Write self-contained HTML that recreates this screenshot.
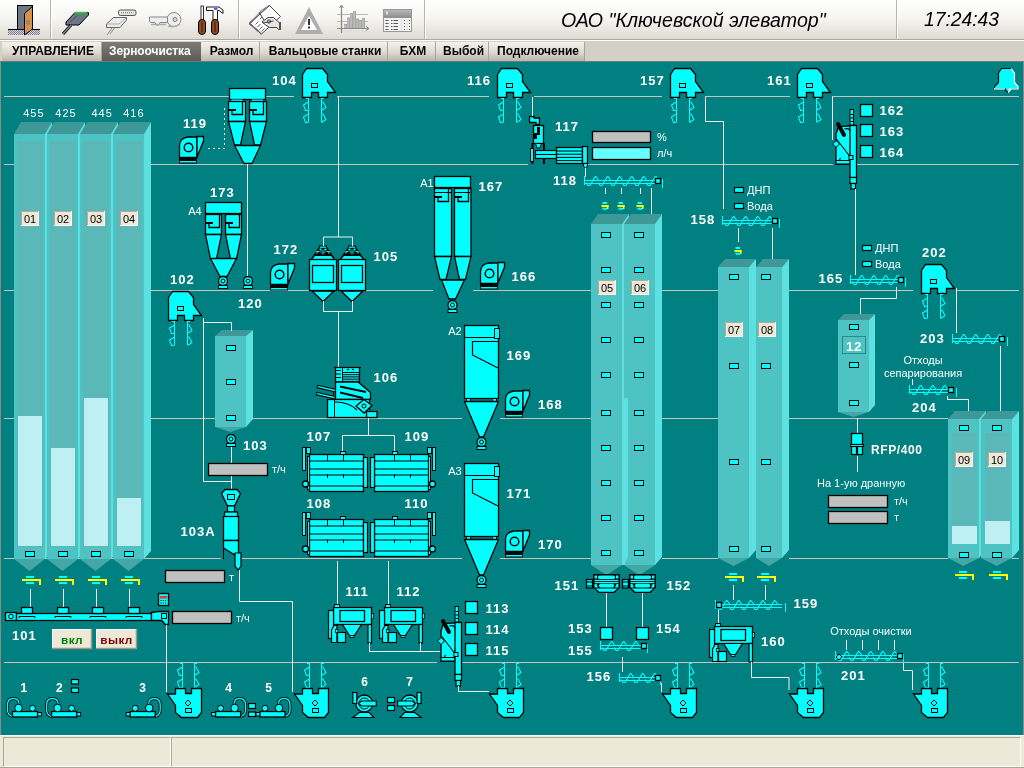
<!DOCTYPE html>
<html><head><meta charset="utf-8"><style>
html,body{margin:0;padding:0;width:1024px;height:768px;overflow:hidden;background:#ECE9D8;font-family:"Liberation Sans",sans-serif}
#tb{position:absolute;left:0;top:0;width:1024px;height:39px;background:linear-gradient(#FFFFFF,#F7F6F3 45%,#DEDBD3);border-bottom:1px solid #ADAAA2}
#tabs{position:absolute;left:0;top:40px;width:1024px;height:21px;background:#D4D0C8;border-top:1px solid #fff;box-sizing:border-box}
.tab{position:absolute;top:1px;height:19px;box-sizing:border-box;background:linear-gradient(#F4F2EC,#DDD9D0 55%,#B9B6AE);font:bold 12px "Liberation Sans",sans-serif;color:#000;text-align:center;line-height:19px;border-right:1px solid #A8A49C;white-space:nowrap;padding-left:3px}
.tab.sel{background:linear-gradient(#7E7C76,#5C5A55);color:#fff;border-right:none;text-align:left;padding-left:7px;letter-spacing:-0.1px}
#main{position:absolute;left:0;top:61px;width:1024px;height:674px;background:#008080;box-sizing:border-box;border-top:1px solid #6E7C78;border-left:1px solid #8C8A84;border-right:1px solid #8C8A84}
#status{position:absolute;left:0;top:735px;width:1024px;height:33px;background:#ECE9D8;border-top:1px solid #fff;border-bottom:1px solid #ACA899;box-sizing:border-box}
.sp{position:absolute;top:1px;height:30px;box-sizing:border-box;border:1px solid #ACA899;border-right-color:#fff;border-bottom-color:#fff}
.ttl{position:absolute;font-family:"Liberation Sans",sans-serif;font-style:italic;color:#000;white-space:nowrap}
svg{position:absolute;left:0;top:0;will-change:transform}
.ttl,.tab{will-change:transform}
</style></head><body>
<div id="tb"></div>
<div id="tabs"><div class="tab" style="left:2px;width:100px">УПРАВЛЕНИЕ</div><div class="tab sel" style="left:102px;width:99px">Зерноочистка</div><div class="tab" style="left:201px;width:59px">Размол</div><div class="tab" style="left:260px;width:128px">Вальцовые станки</div><div class="tab" style="left:388px;width:48px">БХМ</div><div class="tab" style="left:436px;width:53px">Выбой</div><div class="tab" style="left:489px;width:96px">Подключение</div></div>
<div id="main"></div>
<div id="status"><div class="sp" style="left:3px;width:168px"></div><div class="sp" style="left:171px;width:850px"></div></div>
<div class="ttl" style="left:561px;top:9px;font-size:19.6px">ОАО "Ключевской элеватор"</div>
<div class="ttl" style="left:924px;top:9px;font-size:19.3px">17:24:43</div>
<svg width="1024" height="768" viewBox="0 0 1024 768">
<rect x="50" y="0" width="1" height="39" fill="#B8B4AC"/><rect x="51" y="0" width="1" height="39" fill="#fff"/>
<rect x="238" y="0" width="1" height="39" fill="#B8B4AC"/><rect x="239" y="0" width="1" height="39" fill="#fff"/>
<rect x="424" y="0" width="1" height="39" fill="#B8B4AC"/><rect x="425" y="0" width="1" height="39" fill="#fff"/>
<rect x="896" y="0" width="1" height="39" fill="#B8B4AC"/><rect x="897" y="0" width="1" height="39" fill="#fff"/>
<g shape-rendering="crispEdges">
<defs><pattern id="dots" width="2" height="2" patternUnits="userSpaceOnUse"><rect width="2" height="2" fill="#D0D4DC"/><rect width="1" height="1" fill="#7C8494"/><rect x="1" y="1" width="1" height="1" fill="#7C8494"/></pattern></defs>
<rect x="8" y="29" width="32" height="6" fill="url(#dots)"/>
<rect x="8" y="29" width="9" height="1" fill="#000"/><rect x="33" y="29" width="7" height="1" fill="#000"/>
<rect x="17.5" y="5.5" width="15" height="24" fill="#6D7887" stroke="#000"/>
</g>
<polygon points="24.5,13.5 32.5,6.5 32.5,29 24.5,35" fill="#D8914A" stroke="#000"/>
<rect x="27" y="21" width="2" height="3" fill="#B0C8D8" stroke="#333" stroke-width="0.5"/>
<polygon points="66,22 75,12.5 88.5,12.5 88.5,15 79,25 66,25" fill="#6B7785" stroke="#000"/>
<path d="M75 12.5 H87" stroke="#10E010" stroke-width="1.5"/>
<path d="M78 15 L69 23" stroke="#4A5560" stroke-width="1"/>
<path d="M71 25 L63 34" stroke="#000" stroke-width="3"/><path d="M71 25 L63 34" stroke="#7C8894" stroke-width="1.5"/>
<rect x="118.5" y="10" width="17.5" height="5.5" rx="2" fill="#E8E8E8" stroke="#555"/>
<path d="M121 12.8 H133.5" stroke="#666" stroke-dasharray="1 1"/>
<polygon points="106.5,24 113.5,17.5 126.5,17.5 126.5,20 120,27.5 106.5,27.5" fill="#EDEDED" stroke="#666"/>
<path d="M106.5 24 H119 L126 18" stroke="#999" stroke-width="0.8" fill="none"/>
<path d="M112 28 L107 35 M114.5 28 L110 34" stroke="#888" stroke-width="1"/>
<circle cx="174" cy="19.5" r="7" fill="#EEE" stroke="#888"/><circle cx="175" cy="19.5" r="2" fill="#DDD" stroke="#777"/>
<path d="M149.5 17 H167.5 V22.5 H160 L159 25 H156 L155 22.5 H150.5 L149.5 21 Z" fill="#EEE" stroke="#888"/>
<path d="M151 24.5 H166 M168 26 Q174 28 180 24" stroke="#AAA" stroke-width="1.5" fill="none"/>
<rect x="201" y="6" width="2.5" height="14" fill="#fff" stroke="#000" stroke-width="0.8"/>
<rect x="198.5" y="19.5" width="7" height="15" rx="3.5" fill="#8B4A28" stroke="#000"/>
<path d="M206.5 7 H219 L223 10 V13.5 L219 10.5 H217.5 V20 H213 V10.5 H206.5 Z" fill="#fff" stroke="#000" stroke-width="0.9"/>
<rect x="214" y="8.2" width="3.5" height="1.6" fill="#2040FF"/>
<rect x="211.5" y="19.5" width="7" height="15" rx="3.5" fill="#8B4A28" stroke="#000"/>
<path d="M202 22 V32 M215 22 V32" stroke="#3A1A08" stroke-width="1"/>
<polygon points="249.5,23.5 269.5,5.5 280.5,16.5 261.5,34" fill="#fff" stroke="#444" stroke-width="1"/>
<path d="M249.5 23.5 L259 14 L260 12 L269.5 5.5 M249.5 23.5 L261.5 34" stroke="#666" stroke-width="2" stroke-dasharray="1 0.6" fill="none"/>
<path d="M259.5 13 L268.5 27" stroke="#444" stroke-width="1"/>
<path d="M255.5 24.5 L258.5 21.5 M257.5 27 L260.5 24 M259.5 29.5 L262.5 26.5 M261.5 31.5 L264.5 28.5 M260 19 L262 17" stroke="#555" stroke-width="0.9"/>
<path d="M262 22 L268 17.5 H273.5 L279 22.5 H280.5 V29.5 H278.5 L277 27.5 H269.5 L265 24.5 Z" fill="#E6E6E6" stroke="#444" stroke-width="1"/>
<rect x="279" y="22" width="2" height="8" fill="#555"/>
<circle cx="269" cy="21.5" r="1.6" fill="#fff" stroke="#333" stroke-width="1"/><path d="M263 23 L273.5 21" stroke="#333" stroke-width="0.9"/>
<polygon points="309,7 323,34 295,34" fill="#AEAEAE"/>
<polygon points="309,16 317,30 301,30" fill="#fff"/>
<rect x="308" y="19" width="2" height="6" fill="#333"/><rect x="308" y="26.5" width="2" height="2" fill="#333"/>
<path d="M337 14.5 H368 M337 21.5 H368" stroke="#B8B8B8" stroke-width="1"/>
<rect x="344" y="24" width="3" height="4.5" fill="#A8A8A8"/>
<rect x="344.5" y="25" width="1" height="3.5" fill="#C8C8C8"/>
<rect x="347" y="17.5" width="3" height="11.0" fill="#A8A8A8"/>
<rect x="347.5" y="18.5" width="1" height="10.0" fill="#C8C8C8"/>
<rect x="350" y="13" width="3" height="15.5" fill="#A8A8A8"/>
<rect x="350.5" y="14" width="1" height="14.5" fill="#C8C8C8"/>
<rect x="353" y="11" width="3" height="17.5" fill="#A8A8A8"/>
<rect x="353.5" y="12" width="1" height="16.5" fill="#C8C8C8"/>
<rect x="356" y="18.5" width="3" height="10.0" fill="#A8A8A8"/>
<rect x="356.5" y="19.5" width="1" height="9.0" fill="#C8C8C8"/>
<rect x="359" y="20" width="3" height="8.5" fill="#A8A8A8"/>
<rect x="359.5" y="21" width="1" height="7.5" fill="#C8C8C8"/>
<rect x="362" y="18" width="3" height="10.5" fill="#A8A8A8"/>
<rect x="362.5" y="19" width="1" height="9.5" fill="#C8C8C8"/>
<path d="M341.5 6 V33 M337 28.5 H368" stroke="#888" stroke-width="1.2"/>
<path d="M339.5 8 L341.5 5 L343.5 8 M366 26.5 L369 28.5 L366 30.5" stroke="#888" stroke-width="1" fill="none"/>
<path d="M344 31 H366" stroke="#D8D8D8" stroke-width="1.5" stroke-dasharray="1.5 1.5"/>
<defs><linearGradient id="thg" x1="0" y1="0" x2="0" y2="1"><stop offset="0" stop-color="#B8B8B8"/><stop offset="1" stop-color="#8C8C8C"/></linearGradient></defs>
<rect x="383.5" y="9.5" width="28" height="22" fill="#F4F4F4" stroke="#999"/>
<rect x="384" y="10" width="27" height="8" fill="url(#thg)"/>
<rect x="386" y="11.5" width="2" height="3" fill="#E0E0E0"/>
<path d="M385.5 20.5 H388.5 M391 20.5 H392.5 M393.5 20.5 H398 M404 20.5 H405 M409 20.5 H410" stroke="#555" stroke-width="1"/>
<path d="M385.5 23.5 H388.5 M391 23.5 H392.5 M393.5 23.5 H398 M404 23.5 H405 M409 23.5 H410" stroke="#555" stroke-width="1"/>
<path d="M385.5 26.5 H388.5 M391 26.5 H392.5 M393.5 26.5 H398 M404 26.5 H405 M409 26.5 H410" stroke="#555" stroke-width="1"/>
<path d="M385.5 29.5 H388.5 M391 29.5 H392.5 M393.5 29.5 H398 M404 29.5 H405 M409 29.5 H410" stroke="#555" stroke-width="1"/>
<path d="M401 19 V31 M407 19 V31" stroke="#DDD" stroke-width="0.8"/>
<rect x="4" y="96" width="225" height="1" fill="#C8C4BC"/>
<rect x="266" y="96" width="28" height="1" fill="#C8C4BC"/>
<rect x="337" y="96" width="152" height="1" fill="#C8C4BC"/>
<rect x="534" y="96" width="128" height="1" fill="#C8C4BC"/>
<rect x="705" y="96" width="85" height="1" fill="#C8C4BC"/>
<rect x="832" y="96" width="187" height="1" fill="#C8C4BC"/>
<rect x="4" y="164" width="524" height="1" fill="#C8C4BC"/>
<rect x="588" y="164" width="245" height="1" fill="#C8C4BC"/>
<rect x="857" y="164" width="162" height="1" fill="#C8C4BC"/>
<rect x="4" y="290" width="305" height="1" fill="#C8C4BC"/>
<rect x="366" y="290" width="67" height="1" fill="#C8C4BC"/>
<rect x="473" y="290" width="118" height="1" fill="#C8C4BC"/>
<rect x="662" y="290" width="56" height="1" fill="#C8C4BC"/>
<rect x="789" y="290" width="124" height="1" fill="#C8C4BC"/>
<rect x="957" y="290" width="62" height="1" fill="#C8C4BC"/>
<rect x="4" y="418" width="211" height="1" fill="#C8C4BC"/>
<rect x="252" y="418" width="210" height="1" fill="#C8C4BC"/>
<rect x="500" y="418" width="91" height="1" fill="#C8C4BC"/>
<rect x="662" y="418" width="56" height="1" fill="#C8C4BC"/>
<rect x="789" y="418" width="159" height="1" fill="#C8C4BC"/>
<rect x="4" y="558" width="217" height="1" fill="#C8C4BC"/>
<rect x="242" y="558" width="220" height="1" fill="#C8C4BC"/>
<rect x="500" y="558" width="91" height="1" fill="#C8C4BC"/>
<rect x="662" y="558" width="56" height="1" fill="#C8C4BC"/>
<rect x="789" y="558" width="159" height="1" fill="#C8C4BC"/>
<rect x="1012" y="558" width="7" height="1" fill="#C8C4BC"/>
<rect x="4" y="662" width="433" height="1" fill="#C8C4BC"/>
<rect x="462" y="662" width="557" height="1" fill="#C8C4BC"/>
<polygon points="14,134 21,122 52,122 45,134" fill="#3F9898"/>
<polygon points="45,134 52,122 52,551 45,559" fill="#5CE0E0"/>
<rect x="14" y="134" width="31" height="425" fill="#4EC3C3"/>
<rect x="17" y="141" width="26" height="406" fill="#5AB8B8"/>
<rect x="18" y="416" width="24" height="130" fill="#BDEFF3"/>
<polygon points="14,559 45,559 29.5,571" fill="#44A6A6"/>
<polygon points="47,134 54,122 85,122 78,134" fill="#3F9898"/>
<polygon points="78,134 85,122 85,551 78,559" fill="#5CE0E0"/>
<rect x="47" y="134" width="31" height="425" fill="#4EC3C3"/>
<rect x="50" y="141" width="26" height="406" fill="#5AB8B8"/>
<rect x="51" y="448" width="24" height="98" fill="#BDEFF3"/>
<polygon points="47,559 78,559 62.5,571" fill="#44A6A6"/>
<polygon points="80,134 87,122 118,122 111,134" fill="#3F9898"/>
<polygon points="111,134 118,122 118,551 111,559" fill="#5CE0E0"/>
<rect x="80" y="134" width="31" height="425" fill="#4EC3C3"/>
<rect x="83" y="141" width="26" height="406" fill="#5AB8B8"/>
<rect x="84" y="398" width="24" height="148" fill="#BDEFF3"/>
<polygon points="80,559 111,559 95.5,571" fill="#44A6A6"/>
<polygon points="113,134 120,122 151,122 144,134" fill="#3F9898"/>
<polygon points="144,134 151,122 151,551 144,559" fill="#5CE0E0"/>
<rect x="113" y="134" width="31" height="425" fill="#4EC3C3"/>
<rect x="116" y="141" width="26" height="406" fill="#5AB8B8"/>
<rect x="117" y="498" width="24" height="48" fill="#BDEFF3"/>
<polygon points="113,559 144,559 128.5,571" fill="#44A6A6"/>
<rect x="21" y="211" width="18" height="15" fill="#ECE9D8"/>
<path d="M21.5 226 V211.5 H39" stroke="#B8A898" fill="none"/>
<path d="M21 225.5 H38.5 V211" stroke="#fff" fill="none"/>
<text x="30.0" y="222.5" font-family="Liberation Sans" font-size="11" font-weight="normal" fill="#000" text-anchor="middle" >01</text>
<rect x="25.5" y="551.5" width="9" height="5" fill="#00FFFF" stroke="#000" stroke-width="1"/>
<rect x="54" y="211" width="18" height="15" fill="#ECE9D8"/>
<path d="M54.5 226 V211.5 H72" stroke="#B8A898" fill="none"/>
<path d="M54 225.5 H71.5 V211" stroke="#fff" fill="none"/>
<text x="63.0" y="222.5" font-family="Liberation Sans" font-size="11" font-weight="normal" fill="#000" text-anchor="middle" >02</text>
<rect x="58.5" y="551.5" width="9" height="5" fill="#00FFFF" stroke="#000" stroke-width="1"/>
<rect x="87" y="211" width="18" height="15" fill="#ECE9D8"/>
<path d="M87.5 226 V211.5 H105" stroke="#B8A898" fill="none"/>
<path d="M87 225.5 H104.5 V211" stroke="#fff" fill="none"/>
<text x="96.0" y="222.5" font-family="Liberation Sans" font-size="11" font-weight="normal" fill="#000" text-anchor="middle" >03</text>
<rect x="91.5" y="551.5" width="9" height="5" fill="#00FFFF" stroke="#000" stroke-width="1"/>
<rect x="120" y="211" width="18" height="15" fill="#ECE9D8"/>
<path d="M120.5 226 V211.5 H138" stroke="#B8A898" fill="none"/>
<path d="M120 225.5 H137.5 V211" stroke="#fff" fill="none"/>
<text x="129.0" y="222.5" font-family="Liberation Sans" font-size="11" font-weight="normal" fill="#000" text-anchor="middle" >04</text>
<rect x="124.5" y="551.5" width="9" height="5" fill="#00FFFF" stroke="#000" stroke-width="1"/>
<text x="23.2" y="117" font-family="Liberation Sans" font-size="11" font-weight="normal" fill="#fff" text-anchor="start" letter-spacing="1">455</text>
<text x="55.3" y="117" font-family="Liberation Sans" font-size="11" font-weight="normal" fill="#fff" text-anchor="start" letter-spacing="1">425</text>
<text x="91.4" y="117" font-family="Liberation Sans" font-size="11" font-weight="normal" fill="#fff" text-anchor="start" letter-spacing="1">445</text>
<text x="123.2" y="117" font-family="Liberation Sans" font-size="11" font-weight="normal" fill="#fff" text-anchor="start" letter-spacing="1">416</text>
<polygon points="302.5,74.5 306.5,68.5 322.5,68.5 327.5,74.5 327.5,81.5 335.5,92.5 327.5,92.5 327.5,97.5 318.5,97.5 318.5,92.5 311.5,92.5 311.5,97.5 302.5,97.5" fill="#00FFFF" stroke="#000" stroke-width="1.3"/>
<rect x="311.5" y="83.5" width="6" height="4" fill="#00FFFF" stroke="#000" stroke-width="1"/>
<rect x="308" y="98" width="1" height="24" fill="#00FFFF"/>
<path d="M308.5 98.5 H306 M308.5 102 L303.5 105 L305.5 110.5 H308.5 M308.5 114 L303.5 117 L305.5 122.5 H308.5" fill="none" stroke="#00FFFF" stroke-width="1.1"/>
<rect x="321" y="98" width="1" height="24" fill="#00FFFF"/>
<path d="M321.5 98.5 H324 M321.5 102 H323 L326 107.5 L321.5 110.5 M321.5 114 H323 L326 119.5 L321.5 122.5" fill="none" stroke="#00FFFF" stroke-width="1.1"/>
<polygon points="497.5,74.5 501.5,68.5 517.5,68.5 522.5,74.5 522.5,81.5 530.5,92.5 522.5,92.5 522.5,97.5 513.5,97.5 513.5,92.5 506.5,92.5 506.5,97.5 497.5,97.5" fill="#00FFFF" stroke="#000" stroke-width="1.3"/>
<rect x="506.5" y="83.5" width="6" height="4" fill="#00FFFF" stroke="#000" stroke-width="1"/>
<rect x="503" y="98" width="1" height="24" fill="#00FFFF"/>
<path d="M503.5 98.5 H501 M503.5 102 L498.5 105 L500.5 110.5 H503.5 M503.5 114 L498.5 117 L500.5 122.5 H503.5" fill="none" stroke="#00FFFF" stroke-width="1.1"/>
<rect x="516" y="98" width="1" height="24" fill="#00FFFF"/>
<path d="M516.5 98.5 H519 M516.5 102 H518 L521 107.5 L516.5 110.5 M516.5 114 H518 L521 119.5 L516.5 122.5" fill="none" stroke="#00FFFF" stroke-width="1.1"/>
<polygon points="670.5,74.5 674.5,68.5 690.5,68.5 695.5,74.5 695.5,81.5 703.5,92.5 695.5,92.5 695.5,97.5 686.5,97.5 686.5,92.5 679.5,92.5 679.5,97.5 670.5,97.5" fill="#00FFFF" stroke="#000" stroke-width="1.3"/>
<rect x="679.5" y="83.5" width="6" height="4" fill="#00FFFF" stroke="#000" stroke-width="1"/>
<rect x="676" y="98" width="1" height="24" fill="#00FFFF"/>
<path d="M676.5 98.5 H674 M676.5 102 L671.5 105 L673.5 110.5 H676.5 M676.5 114 L671.5 117 L673.5 122.5 H676.5" fill="none" stroke="#00FFFF" stroke-width="1.1"/>
<rect x="689" y="98" width="1" height="24" fill="#00FFFF"/>
<path d="M689.5 98.5 H692 M689.5 102 H691 L694 107.5 L689.5 110.5 M689.5 114 H691 L694 119.5 L689.5 122.5" fill="none" stroke="#00FFFF" stroke-width="1.1"/>
<polygon points="797.5,74.5 801.5,68.5 817.5,68.5 822.5,74.5 822.5,81.5 830.5,92.5 822.5,92.5 822.5,97.5 813.5,97.5 813.5,92.5 806.5,92.5 806.5,97.5 797.5,97.5" fill="#00FFFF" stroke="#000" stroke-width="1.3"/>
<rect x="806.5" y="83.5" width="6" height="4" fill="#00FFFF" stroke="#000" stroke-width="1"/>
<rect x="803" y="98" width="1" height="24" fill="#00FFFF"/>
<path d="M803.5 98.5 H801 M803.5 102 L798.5 105 L800.5 110.5 H803.5 M803.5 114 L798.5 117 L800.5 122.5 H803.5" fill="none" stroke="#00FFFF" stroke-width="1.1"/>
<rect x="816" y="98" width="1" height="24" fill="#00FFFF"/>
<path d="M816.5 98.5 H819 M816.5 102 H818 L821 107.5 L816.5 110.5 M816.5 114 H818 L821 119.5 L816.5 122.5" fill="none" stroke="#00FFFF" stroke-width="1.1"/>
<polygon points="168.5,297.5 172.5,291.5 188.5,291.5 193.5,297.5 193.5,304.5 201.5,315.5 193.5,315.5 193.5,320.5 184.5,320.5 184.5,315.5 177.5,315.5 177.5,320.5 168.5,320.5" fill="#00FFFF" stroke="#000" stroke-width="1.3"/>
<rect x="177.5" y="306.5" width="6" height="4" fill="#00FFFF" stroke="#000" stroke-width="1"/>
<rect x="174" y="321" width="1" height="24" fill="#00FFFF"/>
<path d="M174.5 321.5 H172 M174.5 325 L169.5 328 L171.5 333.5 H174.5 M174.5 337 L169.5 340 L171.5 345.5 H174.5" fill="none" stroke="#00FFFF" stroke-width="1.1"/>
<rect x="187" y="321" width="1" height="24" fill="#00FFFF"/>
<path d="M187.5 321.5 H190 M187.5 325 H189 L192 330.5 L187.5 333.5 M187.5 337 H189 L192 342.5 L187.5 345.5" fill="none" stroke="#00FFFF" stroke-width="1.1"/>
<polygon points="921.5,270.5 925.5,264.5 941.5,264.5 946.5,270.5 946.5,277.5 954.5,288.5 946.5,288.5 946.5,293.5 937.5,293.5 937.5,288.5 930.5,288.5 930.5,293.5 921.5,293.5" fill="#00FFFF" stroke="#000" stroke-width="1.3"/>
<rect x="930.5" y="279.5" width="6" height="4" fill="#00FFFF" stroke="#000" stroke-width="1"/>
<rect x="927" y="294" width="1" height="24" fill="#00FFFF"/>
<path d="M927.5 294.5 H925 M927.5 298 L922.5 301 L924.5 306.5 H927.5 M927.5 310 L922.5 313 L924.5 318.5 H927.5" fill="none" stroke="#00FFFF" stroke-width="1.1"/>
<rect x="940" y="294" width="1" height="24" fill="#00FFFF"/>
<path d="M940.5 294.5 H943 M940.5 298 H942 L945 303.5 L940.5 306.5 M940.5 310 H942 L945 315.5 L940.5 318.5" fill="none" stroke="#00FFFF" stroke-width="1.1"/>
<text x="138" y="285" font-family="Liberation Sans" font-size="13" font-weight="bold" fill="#fff" text-anchor="start" ></text>
<rect x="182" y="663" width="1" height="25" fill="#00FFFF"/>
<path d="M182.5 663.5 H180 M182.5 667 L177.5 670 L179.5 675.5 H182.5 M182.5 679 L177.5 682 L179.5 687.5 H182.5" fill="none" stroke="#00FFFF" stroke-width="1.1"/>
<rect x="194" y="663" width="1" height="25" fill="#00FFFF"/>
<path d="M194.5 663.5 H197 M194.5 667 H196 L199 672.5 L194.5 675.5 M194.5 679 H196 L199 684.5 L194.5 687.5" fill="none" stroke="#00FFFF" stroke-width="1.1"/>
<polygon points="167.5,694.0 175.5,694.0 175.5,688.5 185.5,688.5 185.5,693.5 191.5,693.5 191.5,688.5 201.5,688.5 201.5,712.5 197.5,717.5 181.5,717.5 175.5,712.5 175.5,705.5" fill="#00FFFF" stroke="#000" stroke-width="1.3"/>
<polygon points="188,700 191,703 188,706 185,703" fill="#00FFFF" stroke="#000" stroke-width="1"/>
<rect x="185.5" y="708.5" width="6" height="4" fill="#00FFFF" stroke="#000" stroke-width="1"/>
<rect x="309" y="663" width="1" height="25" fill="#00FFFF"/>
<path d="M309.5 663.5 H307 M309.5 667 L304.5 670 L306.5 675.5 H309.5 M309.5 679 L304.5 682 L306.5 687.5 H309.5" fill="none" stroke="#00FFFF" stroke-width="1.1"/>
<rect x="321" y="663" width="1" height="25" fill="#00FFFF"/>
<path d="M321.5 663.5 H324 M321.5 667 H323 L326 672.5 L321.5 675.5 M321.5 679 H323 L326 684.5 L321.5 687.5" fill="none" stroke="#00FFFF" stroke-width="1.1"/>
<polygon points="294.5,694.0 302.5,694.0 302.5,688.5 312.5,688.5 312.5,693.5 318.5,693.5 318.5,688.5 328.5,688.5 328.5,712.5 324.5,717.5 308.5,717.5 302.5,712.5 302.5,705.5" fill="#00FFFF" stroke="#000" stroke-width="1.3"/>
<polygon points="315,700 318,703 315,706 312,703" fill="#00FFFF" stroke="#000" stroke-width="1"/>
<rect x="312.5" y="708.5" width="6" height="4" fill="#00FFFF" stroke="#000" stroke-width="1"/>
<rect x="504" y="663" width="1" height="25" fill="#00FFFF"/>
<path d="M504.5 663.5 H502 M504.5 667 L499.5 670 L501.5 675.5 H504.5 M504.5 679 L499.5 682 L501.5 687.5 H504.5" fill="none" stroke="#00FFFF" stroke-width="1.1"/>
<rect x="516" y="663" width="1" height="25" fill="#00FFFF"/>
<path d="M516.5 663.5 H519 M516.5 667 H518 L521 672.5 L516.5 675.5 M516.5 679 H518 L521 684.5 L516.5 687.5" fill="none" stroke="#00FFFF" stroke-width="1.1"/>
<polygon points="489.5,694.0 497.5,694.0 497.5,688.5 507.5,688.5 507.5,693.5 513.5,693.5 513.5,688.5 523.5,688.5 523.5,712.5 519.5,717.5 503.5,717.5 497.5,712.5 497.5,705.5" fill="#00FFFF" stroke="#000" stroke-width="1.3"/>
<polygon points="510,700 513,703 510,706 507,703" fill="#00FFFF" stroke="#000" stroke-width="1"/>
<rect x="507.5" y="708.5" width="6" height="4" fill="#00FFFF" stroke="#000" stroke-width="1"/>
<rect x="677" y="663" width="1" height="25" fill="#00FFFF"/>
<path d="M677.5 663.5 H675 M677.5 667 L672.5 670 L674.5 675.5 H677.5 M677.5 679 L672.5 682 L674.5 687.5 H677.5" fill="none" stroke="#00FFFF" stroke-width="1.1"/>
<rect x="689" y="663" width="1" height="25" fill="#00FFFF"/>
<path d="M689.5 663.5 H692 M689.5 667 H691 L694 672.5 L689.5 675.5 M689.5 679 H691 L694 684.5 L689.5 687.5" fill="none" stroke="#00FFFF" stroke-width="1.1"/>
<polygon points="662.5,694.0 670.5,694.0 670.5,688.5 680.5,688.5 680.5,693.5 686.5,693.5 686.5,688.5 696.5,688.5 696.5,712.5 692.5,717.5 676.5,717.5 670.5,712.5 670.5,705.5" fill="#00FFFF" stroke="#000" stroke-width="1.3"/>
<polygon points="683,700 686,703 683,706 680,703" fill="#00FFFF" stroke="#000" stroke-width="1"/>
<rect x="680.5" y="708.5" width="6" height="4" fill="#00FFFF" stroke="#000" stroke-width="1"/>
<rect x="804" y="663" width="1" height="25" fill="#00FFFF"/>
<path d="M804.5 663.5 H802 M804.5 667 L799.5 670 L801.5 675.5 H804.5 M804.5 679 L799.5 682 L801.5 687.5 H804.5" fill="none" stroke="#00FFFF" stroke-width="1.1"/>
<rect x="816" y="663" width="1" height="25" fill="#00FFFF"/>
<path d="M816.5 663.5 H819 M816.5 667 H818 L821 672.5 L816.5 675.5 M816.5 679 H818 L821 684.5 L816.5 687.5" fill="none" stroke="#00FFFF" stroke-width="1.1"/>
<polygon points="789.5,694.0 797.5,694.0 797.5,688.5 807.5,688.5 807.5,693.5 813.5,693.5 813.5,688.5 823.5,688.5 823.5,712.5 819.5,717.5 803.5,717.5 797.5,712.5 797.5,705.5" fill="#00FFFF" stroke="#000" stroke-width="1.3"/>
<polygon points="810,700 813,703 810,706 807,703" fill="#00FFFF" stroke="#000" stroke-width="1"/>
<rect x="807.5" y="708.5" width="6" height="4" fill="#00FFFF" stroke="#000" stroke-width="1"/>
<rect x="928" y="663" width="1" height="25" fill="#00FFFF"/>
<path d="M928.5 663.5 H926 M928.5 667 L923.5 670 L925.5 675.5 H928.5 M928.5 679 L923.5 682 L925.5 687.5 H928.5" fill="none" stroke="#00FFFF" stroke-width="1.1"/>
<rect x="940" y="663" width="1" height="25" fill="#00FFFF"/>
<path d="M940.5 663.5 H943 M940.5 667 H942 L945 672.5 L940.5 675.5 M940.5 679 H942 L945 684.5 L940.5 687.5" fill="none" stroke="#00FFFF" stroke-width="1.1"/>
<polygon points="913.5,694.0 921.5,694.0 921.5,688.5 931.5,688.5 931.5,693.5 937.5,693.5 937.5,688.5 947.5,688.5 947.5,712.5 943.5,717.5 927.5,717.5 921.5,712.5 921.5,705.5" fill="#00FFFF" stroke="#000" stroke-width="1.3"/>
<polygon points="934,700 937,703 934,706 931,703" fill="#00FFFF" stroke="#000" stroke-width="1"/>
<rect x="931.5" y="708.5" width="6" height="4" fill="#00FFFF" stroke="#000" stroke-width="1"/>
<rect x="229.5" y="88.5" width="36" height="11" fill="#00FFFF" stroke="#000" stroke-width="1.3"/>
<rect x="231.5" y="99.5" width="11" height="1.5" fill="#00FFFF"/>
<rect x="252" y="99.5" width="11" height="1.5" fill="#00FFFF"/>
<rect x="228.5" y="101.5" width="17" height="20" fill="#00FFFF" stroke="#000" stroke-width="1.3"/>
<rect x="249.5" y="101.5" width="17" height="20" fill="#00FFFF" stroke="#000" stroke-width="1.3"/>
<polygon points="228.5,121.5 245.5,121.5 240.5,145 234.5,145" fill="#00FFFF" stroke="#000" stroke-width="1.3"/>
<polygon points="249.5,121.5 266.5,121.5 260.5,145 254.5,145" fill="#00FFFF" stroke="#000" stroke-width="1.3"/>
<path d="M242.5 101.5 V114.5 H232.0 V110.0" fill="none" stroke="#000" stroke-width="1.3"/>
<rect x="228.5" y="109.0" width="7.5" height="2" fill="#000"/>
<path d="M263.5 101.5 V114.5 H253.0 V110.0" fill="none" stroke="#000" stroke-width="1.3"/>
<rect x="249.5" y="109.0" width="7.5" height="2" fill="#000"/>
<polygon points="234.5,145.5 260.5,145.5 252,163.5 244,163.5" fill="#00FFFF" stroke="#000" stroke-width="1.3"/>
<path d="M179.5 157.5 V145 Q180 138 188 137 H197 V157.5 Z" fill="#00FFFF" stroke="#000" stroke-width="1.3"/>
<polygon points="197,136.5 203.5,136.5 203.5,141 197,157" fill="#00FFFF" stroke="#000" stroke-width="1.3"/>
<circle cx="188.5" cy="147.5" r="4.3" fill="#00FFFF" stroke="#000" stroke-width="1.5"/>
<rect x="179" y="158" width="18" height="2.5" fill="#000"/>
<rect x="179.5" y="160.5" width="17" height="2.5" fill="#00FFFF" stroke="#000" stroke-width="1"/>
<path d="M205 148.5 H224.5 V105" fill="none" stroke="#F0F0F0" stroke-width="1"/>
<path d="M205 148.5 H224.5 V105" stroke="#008080" stroke-width="1.5" stroke-dasharray="3 2" fill="none"/>
<rect x="247" y="164" width="1" height="112" fill="#F0F0F0"/>
<rect x="205.5" y="202.5" width="36" height="11" fill="#00FFFF" stroke="#000" stroke-width="1.3"/>
<rect x="205.5" y="214.5" width="16" height="20" fill="#00FFFF" stroke="#000" stroke-width="1.3"/>
<rect x="225.5" y="214.5" width="16" height="20" fill="#00FFFF" stroke="#000" stroke-width="1.3"/>
<polygon points="205.5,234.5 221.5,234.5 216.5,259 210.5,259" fill="#00FFFF" stroke="#000" stroke-width="1.3"/>
<polygon points="225.5,234.5 241.5,234.5 236.5,259 230.5,259" fill="#00FFFF" stroke="#000" stroke-width="1.3"/>
<path d="M219.5 214.5 V227.5 H209.0 V223.0" fill="none" stroke="#000" stroke-width="1.3"/>
<rect x="205.5" y="222.0" width="7.5" height="2" fill="#000"/>
<path d="M239.5 214.5 V227.5 H229.0 V223.0" fill="none" stroke="#000" stroke-width="1.3"/>
<rect x="225.5" y="222.0" width="7.5" height="2" fill="#000"/>
<polygon points="210.5,258.5 236.5,258.5 227,276.5 220,276.5" fill="#00FFFF" stroke="#000" stroke-width="1.3"/>
<text x="195" y="215" font-family="Liberation Sans" font-size="11" font-weight="normal" fill="#fff" text-anchor="middle" >A4</text>
<circle cx="223" cy="281" r="4.5" fill="#00FFFF" stroke="#000" stroke-width="1.3"/>
<circle cx="223" cy="281" r="2" fill="#00FFFF" stroke="#000" stroke-width="1"/>
<rect x="218.5" y="285.5" width="9" height="3" fill="#00FFFF" stroke="#000" stroke-width="1"/>
<circle cx="248" cy="281" r="4.5" fill="#00FFFF" stroke="#000" stroke-width="1.3"/>
<circle cx="248" cy="281" r="2" fill="#00FFFF" stroke="#000" stroke-width="1"/>
<rect x="243.5" y="285.5" width="9" height="3" fill="#00FFFF" stroke="#000" stroke-width="1"/>
<path d="M270.5 284.5 V272 Q271 265 279 264 H288 V284.5 Z" fill="#00FFFF" stroke="#000" stroke-width="1.3"/>
<polygon points="288,263.5 294.5,263.5 294.5,268 288,284" fill="#00FFFF" stroke="#000" stroke-width="1.3"/>
<circle cx="279.5" cy="274.5" r="4.3" fill="#00FFFF" stroke="#000" stroke-width="1.5"/>
<rect x="270" y="285" width="18" height="2.5" fill="#000"/>
<rect x="270.5" y="287.5" width="17" height="2.5" fill="#00FFFF" stroke="#000" stroke-width="1"/>
<polygon points="310.5,259.5 319,247 327,247 335.5,259.5" fill="#000"/>
<rect x="319" y="245.5" width="8" height="3.5" fill="#000"/>
<rect x="320" y="246.5" width="6" height="1.3" fill="#00FFFF"/>
<polygon points="312.5,259 315,256 331,256 333.5,259" fill="#00FFFF"/>
<path d="M317 253.5 V251.5 H319.5 M329 253.5 V251.5 H326.5" fill="none" stroke="#00FFFF" stroke-width="1.2"/>
<rect x="319.5" y="248.5" width="2" height="2" fill="#00FFFF"/>
<rect x="324.5" y="248.5" width="2" height="2" fill="#00FFFF"/>
<polygon points="323,249 326,252 323,255 320,252" fill="#008080"/>
<rect x="309.5" y="259.5" width="27" height="31" fill="#00FFFF" stroke="#000" stroke-width="1.3"/>
<rect x="312.5" y="265.5" width="21" height="17" fill="#00FFFF" stroke="#000" stroke-width="1.3"/>
<polygon points="312,291 334,291 323,301.5" fill="#00FFFF" stroke="#000" stroke-width="1.3"/>
<polygon points="339.5,259.5 348,247 356,247 364.5,259.5" fill="#000"/>
<rect x="348" y="245.5" width="8" height="3.5" fill="#000"/>
<rect x="349" y="246.5" width="6" height="1.3" fill="#00FFFF"/>
<polygon points="341.5,259 344,256 360,256 362.5,259" fill="#00FFFF"/>
<path d="M346 253.5 V251.5 H348.5 M358 253.5 V251.5 H355.5" fill="none" stroke="#00FFFF" stroke-width="1.2"/>
<rect x="348.5" y="248.5" width="2" height="2" fill="#00FFFF"/>
<rect x="353.5" y="248.5" width="2" height="2" fill="#00FFFF"/>
<polygon points="352,249 355,252 352,255 349,252" fill="#008080"/>
<rect x="338.5" y="259.5" width="27" height="31" fill="#00FFFF" stroke="#000" stroke-width="1.3"/>
<rect x="341.5" y="265.5" width="21" height="17" fill="#00FFFF" stroke="#000" stroke-width="1.3"/>
<polygon points="341,291 363,291 352,301.5" fill="#00FFFF" stroke="#000" stroke-width="1.3"/>
<path d="M338.5 96 V237 M323.5 246 V237 H352.5 V246" fill="none" stroke="#F0F0F0" stroke-width="1"/>
<path d="M323.5 301 V311.5 H352.5 V301 M338.5 311.5 V368" fill="none" stroke="#F0F0F0" stroke-width="1"/>
<rect x="335.5" y="367.5" width="24" height="14.5" fill="#00FFFF" stroke="#000" stroke-width="1.3"/>
<rect x="334" y="367" width="27" height="1" fill="#000"/>
<rect x="342" y="368" width="1" height="14" fill="#000"/>
<rect x="336" y="370.0" width="5" height="1" fill="#000"/>
<rect x="336" y="373.5" width="5" height="1" fill="#000"/>
<rect x="336" y="377.0" width="5" height="1" fill="#000"/>
<rect x="343" y="372.0" width="16" height="1" fill="#000"/>
<rect x="343" y="374.2" width="16" height="1" fill="#000"/>
<rect x="343" y="376.4" width="16" height="1" fill="#000"/>
<rect x="343" y="378.6" width="16" height="1" fill="#000"/>
<rect x="343" y="380.8" width="16" height="1" fill="#000"/>
<path d="M347 370 L349 369 M352 369 L354 370" fill="none" stroke="#000" stroke-width="1.2"/>
<polygon points="335.5,382 358,382 370.5,392.5 370.5,399.5 335.5,399.5" fill="#00FFFF" stroke="#000" stroke-width="1.3"/>
<path d="M340 386.5 L366 392 M340 392.5 L363 398" fill="none" stroke="#000" stroke-width="2"/>
<path d="M359 382.5 L370 392" fill="none" stroke="#000" stroke-width="1"/>
<rect x="333" y="388" width="1" height="12" fill="#000"/>
<path d="M317 386.5 L335 390.5" stroke="#000" stroke-width="3.5"/>
<path d="M318 386.7 L335 390.5" stroke="#00FFFF" stroke-width="1.3"/>
<path d="M316 393.5 L334 397.5" stroke="#000" stroke-width="3.5"/>
<path d="M317 393.7 L334 397.5" stroke="#00FFFF" stroke-width="1.3"/>
<rect x="327.5" y="399.5" width="42" height="18" fill="#00FFFF" stroke="#000" stroke-width="1.3"/>
<rect x="334" y="400" width="1" height="17" fill="#000"/>
<path d="M335 402 Q349 402 357 410" fill="none" stroke="#000" stroke-width="1.2"/>
<polygon points="356,406 364,399.5 372,405.5 364,413" fill="#00FFFF" stroke="#000" stroke-width="1.3"/>
<circle cx="364" cy="406" r="2" fill="none" stroke="#000" stroke-width="1"/>
<rect x="366.5" y="411.5" width="10.5" height="6" fill="#00FFFF" stroke="#000" stroke-width="1.3"/>
<path d="M368.5 418 V435.5 M342.5 451 V435.5 H394.5 V451" fill="none" stroke="#F0F0F0" stroke-width="1"/>
<g>
<rect x="309.5" y="454.5" width="54" height="37" fill="#00FFFF" stroke="#000" stroke-width="1.3"/>
<rect x="310" y="460.5" width="53" height="1" fill="#000"/>
<rect x="310" y="468.5" width="53" height="1" fill="#000"/>
<rect x="310" y="474.5" width="53" height="1" fill="#000"/>
<rect x="310" y="485.5" width="53" height="1" fill="#000"/>
<rect x="327" y="455" width="1" height="5.5" fill="#000"/>
<rect x="343" y="455" width="1" height="5.5" fill="#000"/>
<rect x="327" y="474.5" width="1" height="3.5" fill="#000"/>
<rect x="343" y="474.5" width="1" height="3.5" fill="#000"/>
<rect x="363.5" y="457.5" width="4" height="30" fill="#00FFFF" stroke="#000" stroke-width="1.2"/>
<rect x="340.5" y="451.5" width="5" height="3" fill="#00FFFF" stroke="#000" stroke-width="1"/>
<rect x="307.5" y="456.5" width="2" height="33" fill="#00FFFF" stroke="#000" stroke-width="1"/>
<rect x="302.5" y="447.5" width="3" height="23" fill="#00FFFF" stroke="#000" stroke-width="1"/>
<rect x="306.5" y="447.5" width="4" height="6" fill="#00FFFF" stroke="#000" stroke-width="1"/>
<circle cx="305.5" cy="484" r="3" fill="#00FFFF" stroke="#000" stroke-width="1.3"/>
</g>
<g transform="translate(804 0) scale(-1 1)">
<rect x="375.5" y="454.5" width="54" height="37" fill="#00FFFF" stroke="#000" stroke-width="1.3"/>
<rect x="376" y="460.5" width="53" height="1" fill="#000"/>
<rect x="376" y="468.5" width="53" height="1" fill="#000"/>
<rect x="376" y="474.5" width="53" height="1" fill="#000"/>
<rect x="376" y="485.5" width="53" height="1" fill="#000"/>
<rect x="393" y="455" width="1" height="5.5" fill="#000"/>
<rect x="409" y="455" width="1" height="5.5" fill="#000"/>
<rect x="393" y="474.5" width="1" height="3.5" fill="#000"/>
<rect x="409" y="474.5" width="1" height="3.5" fill="#000"/>
<rect x="429.5" y="457.5" width="4" height="30" fill="#00FFFF" stroke="#000" stroke-width="1.2"/>
<rect x="406.5" y="451.5" width="5" height="3" fill="#00FFFF" stroke="#000" stroke-width="1"/>
<rect x="373.5" y="456.5" width="2" height="33" fill="#00FFFF" stroke="#000" stroke-width="1"/>
<rect x="368.5" y="447.5" width="3" height="23" fill="#00FFFF" stroke="#000" stroke-width="1"/>
<rect x="372.5" y="447.5" width="4" height="6" fill="#00FFFF" stroke="#000" stroke-width="1"/>
<circle cx="371.5" cy="484" r="3" fill="#00FFFF" stroke="#000" stroke-width="1.3"/>
</g>
<g>
<rect x="309.5" y="519.5" width="54" height="37" fill="#00FFFF" stroke="#000" stroke-width="1.3"/>
<rect x="310" y="525.5" width="53" height="1" fill="#000"/>
<rect x="310" y="533.5" width="53" height="1" fill="#000"/>
<rect x="310" y="539.5" width="53" height="1" fill="#000"/>
<rect x="310" y="550.5" width="53" height="1" fill="#000"/>
<rect x="327" y="520" width="1" height="5.5" fill="#000"/>
<rect x="343" y="520" width="1" height="5.5" fill="#000"/>
<rect x="327" y="539.5" width="1" height="3.5" fill="#000"/>
<rect x="343" y="539.5" width="1" height="3.5" fill="#000"/>
<rect x="363.5" y="522.5" width="4" height="30" fill="#00FFFF" stroke="#000" stroke-width="1.2"/>
<rect x="340.5" y="516.5" width="5" height="3" fill="#00FFFF" stroke="#000" stroke-width="1"/>
<rect x="307.5" y="521.5" width="2" height="33" fill="#00FFFF" stroke="#000" stroke-width="1"/>
<rect x="302.5" y="512.5" width="3" height="23" fill="#00FFFF" stroke="#000" stroke-width="1"/>
<rect x="306.5" y="512.5" width="4" height="6" fill="#00FFFF" stroke="#000" stroke-width="1"/>
<circle cx="305.5" cy="549" r="3" fill="#00FFFF" stroke="#000" stroke-width="1.3"/>
</g>
<g transform="translate(804 0) scale(-1 1)">
<rect x="375.5" y="519.5" width="54" height="37" fill="#00FFFF" stroke="#000" stroke-width="1.3"/>
<rect x="376" y="525.5" width="53" height="1" fill="#000"/>
<rect x="376" y="533.5" width="53" height="1" fill="#000"/>
<rect x="376" y="539.5" width="53" height="1" fill="#000"/>
<rect x="376" y="550.5" width="53" height="1" fill="#000"/>
<rect x="393" y="520" width="1" height="5.5" fill="#000"/>
<rect x="409" y="520" width="1" height="5.5" fill="#000"/>
<rect x="393" y="539.5" width="1" height="3.5" fill="#000"/>
<rect x="409" y="539.5" width="1" height="3.5" fill="#000"/>
<rect x="429.5" y="522.5" width="4" height="30" fill="#00FFFF" stroke="#000" stroke-width="1.2"/>
<rect x="406.5" y="516.5" width="5" height="3" fill="#00FFFF" stroke="#000" stroke-width="1"/>
<rect x="373.5" y="521.5" width="2" height="33" fill="#00FFFF" stroke="#000" stroke-width="1"/>
<rect x="368.5" y="512.5" width="3" height="23" fill="#00FFFF" stroke="#000" stroke-width="1"/>
<rect x="372.5" y="512.5" width="4" height="6" fill="#00FFFF" stroke="#000" stroke-width="1"/>
<circle cx="371.5" cy="549" r="3" fill="#00FFFF" stroke="#000" stroke-width="1.3"/>
</g>
<polygon points="215,336 222,330 253,330 246,336" fill="#3F9898"/>
<polygon points="246,336 253,330 253,419 246,427" fill="#5CE0E0"/>
<rect x="215" y="336" width="31" height="91" fill="#4EC3C3"/>
<polygon points="215,427 246,427 230.5,432" fill="#44A6A6"/>
<rect x="226.5" y="345.5" width="9" height="5" fill="#00FFFF" stroke="#000" stroke-width="1"/>
<rect x="226.5" y="379.5" width="9" height="5" fill="#00FFFF" stroke="#000" stroke-width="1"/>
<rect x="226.5" y="415.5" width="9" height="5" fill="#00FFFF" stroke="#000" stroke-width="1"/>
<circle cx="231" cy="439" r="4.5" fill="#00FFFF" stroke="#000" stroke-width="1.3"/>
<circle cx="231" cy="439" r="2" fill="#00FFFF" stroke="#000" stroke-width="1"/>
<rect x="226.5" y="443.5" width="9" height="3" fill="#00FFFF" stroke="#000" stroke-width="1"/>
<path d="M203.5 318 V481.5 H231.5 M231.5 447 V490" fill="none" stroke="#F0F0F0" stroke-width="1"/>
<path d="M203.5 322.5 H231.5 V331" fill="none" stroke="#F0F0F0" stroke-width="1"/>
<rect x="208.5" y="463.5" width="59" height="12" fill="#C0C0C0" stroke="#000" stroke-width="1.3"/>
<text x="272" y="473" font-family="Liberation Sans" font-size="11" font-weight="normal" fill="#fff" text-anchor="start" >т/ч</text>
<polygon points="221.5,493.5 225,489.5 237,489.5 240.5,493.5 234.5,506 227.5,506" fill="#00FFFF" stroke="#000" stroke-width="1.3"/>
<rect x="227.5" y="494.5" width="7" height="5" fill="#00FFFF" stroke="#000" stroke-width="1"/>
<rect x="227.5" y="506" width="7" height="6" fill="#00FFFF" stroke="#000" stroke-width="1.2"/>
<rect x="224.5" y="512" width="13" height="5" fill="#00FFFF" stroke="#000" stroke-width="1.2"/>
<rect x="223.5" y="516.5" width="15" height="24" fill="#00FFFF" stroke="#000" stroke-width="1.3"/>
<polygon points="223.5,540.5 238.5,540.5 238.5,555 235,555 223.5,548" fill="#00FFFF" stroke="#000" stroke-width="1.3"/>
<rect x="223" y="540" width="1" height="19" fill="#000"/>
<polygon points="235,553 241,553 241,566 238,570 235,566" fill="#00FFFF" stroke="#000" stroke-width="1.2"/>
<path d="M239.5 570 V601.5 H292.5 V692" fill="none" stroke="#F0F0F0" stroke-width="1"/>
<rect x="165.5" y="570.5" width="59" height="12" fill="#C0C0C0" stroke="#000" stroke-width="1.3"/>
<text x="229" y="581" font-family="Liberation Sans" font-size="11" font-weight="normal" fill="#fff" text-anchor="start" >т</text>
<rect x="333.5" y="607.5" width="38" height="17" fill="#00FFFF" stroke="#000" stroke-width="1.3"/>
<rect x="340" y="610.5" width="24.5" height="11" fill="#00FFFF" stroke="#000" stroke-width="1.3"/>
<rect x="328.5" y="610.5" width="5" height="28" fill="#00FFFF" stroke="#000" stroke-width="1.2"/>
<polygon points="342.5,624.5 361.5,624.5 354.5,635.5 349.5,635.5" fill="#00FFFF" stroke="#000" stroke-width="1.2"/>
<rect x="350" y="635.5" width="4" height="2" fill="#00FFFF" stroke="#000" stroke-width="0.8"/>
<rect x="368" y="624.5" width="3.5" height="18.5" fill="#00FFFF" stroke="#000" stroke-width="1.2"/>
<polygon points="331.5,630 334,625.5 337,625.5 337,642.5 331.5,642.5" fill="#00FFFF" stroke="#000" stroke-width="1.2"/>
<rect x="337.5" y="632.5" width="8" height="10" fill="#00FFFF" stroke="#000" stroke-width="1.2"/>
<rect x="335.5" y="629.5" width="2.5" height="3" fill="#00FFFF" stroke="#000" stroke-width="0.8"/>
<rect x="334.5" y="604.5" width="5" height="3" fill="#00FFFF" stroke="#000" stroke-width="1"/>
<rect x="371.5" y="613.5" width="2" height="5" fill="#00FFFF" stroke="#000" stroke-width="0.8"/>
<rect x="384.5" y="607.5" width="38" height="17" fill="#00FFFF" stroke="#000" stroke-width="1.3"/>
<rect x="391" y="610.5" width="24.5" height="11" fill="#00FFFF" stroke="#000" stroke-width="1.3"/>
<rect x="379.5" y="610.5" width="5" height="28" fill="#00FFFF" stroke="#000" stroke-width="1.2"/>
<polygon points="393.5,624.5 412.5,624.5 405.5,635.5 400.5,635.5" fill="#00FFFF" stroke="#000" stroke-width="1.2"/>
<rect x="401" y="635.5" width="4" height="2" fill="#00FFFF" stroke="#000" stroke-width="0.8"/>
<rect x="419" y="624.5" width="3.5" height="18.5" fill="#00FFFF" stroke="#000" stroke-width="1.2"/>
<polygon points="382.5,630 385,625.5 388,625.5 388,642.5 382.5,642.5" fill="#00FFFF" stroke="#000" stroke-width="1.2"/>
<rect x="388.5" y="632.5" width="8" height="10" fill="#00FFFF" stroke="#000" stroke-width="1.2"/>
<rect x="386.5" y="629.5" width="2.5" height="3" fill="#00FFFF" stroke="#000" stroke-width="0.8"/>
<rect x="385.5" y="604.5" width="5" height="3" fill="#00FFFF" stroke="#000" stroke-width="1"/>
<rect x="422.5" y="613.5" width="2" height="5" fill="#00FFFF" stroke="#000" stroke-width="0.8"/>
<path d="M337.5 561 V604 M388.5 561 V604" fill="none" stroke="#F0F0F0" stroke-width="1"/>
<path d="M369.5 643 V651.5 H441 M420.5 643 V651.5" fill="none" stroke="#F0F0F0" stroke-width="1"/>
<path d="M400 597 " fill="none" stroke="#F0F0F0" stroke-width="1"/>
<rect x="455.0" y="606.5" width="3.5" height="15.5" fill="#00FFFF" stroke="#000" stroke-width="1"/>
<rect x="455.5" y="611.0" width="3.0" height="1" fill="#000"/>
<rect x="455.5" y="614.5" width="3.0" height="1" fill="#000"/>
<rect x="455.5" y="618.0" width="3.0" height="1" fill="#000"/>
<polygon points="441.0,631 443.5,623.5 461.0,622.5 461.0,661 441.0,661" fill="#00FFFF" stroke="#000" stroke-width="1.3"/>
<polygon points="437.5,641 441.0,637.5 444.5,641 441.0,644.5" fill="#00FFFF" stroke="#000" stroke-width="1"/>
<path d="M441.5 636 L454.5 653 M461.0 632 L455.0 651 M443.5 659 L445.5 655" fill="none" stroke="#000" stroke-width="1.1"/>
<path d="M449.5 626 Q455.5 624 455.5 631" fill="none" stroke="#000" stroke-width="1.2"/>
<path d="M443.0 621 L449.0 632" stroke="#000" stroke-width="4" stroke-linecap="round"/>
<rect x="441.0" y="657.5" width="14" height="3.5" fill="#00FFFF" stroke="#000" stroke-width="1"/>
<rect x="455.0" y="622.5" width="6.5" height="52" fill="#00FFFF" stroke="#000" stroke-width="1.3"/>
<rect x="454.0" y="652.5" width="4" height="4" fill="#00FFFF" stroke="#000" stroke-width="1"/>
<rect x="455.0" y="674.5" width="6.5" height="6" fill="#00FFFF" stroke="#000" stroke-width="1.2"/>
<rect x="456.0" y="680.5" width="4.5" height="5.5" fill="#00FFFF" stroke="#000" stroke-width="1.2"/>
<rect x="465.5" y="601.5" width="12" height="12" fill="#00FFFF" stroke="#000" stroke-width="1.3"/>
<rect x="465.5" y="622.5" width="12" height="12" fill="#00FFFF" stroke="#000" stroke-width="1.3"/>
<rect x="465.5" y="643.5" width="12" height="12" fill="#00FFFF" stroke="#000" stroke-width="1.3"/>
<path d="M458.5 686 V691.5 H489" fill="none" stroke="#F0F0F0" stroke-width="1"/>
<rect x="434.5" y="176.5" width="36" height="11" fill="#00FFFF" stroke="#000" stroke-width="1.3"/>
<rect x="434.5" y="188.5" width="17" height="68" fill="#00FFFF" stroke="#000" stroke-width="1.3"/>
<rect x="454.5" y="188.5" width="16.5" height="68" fill="#00FFFF" stroke="#000" stroke-width="1.3"/>
<path d="M435 192.5 H451 M455 192.5 H470" fill="none" stroke="#000" stroke-width="1.2"/>
<path d="M448.5 188.5 V201.5 H438.0 V197.0" fill="none" stroke="#000" stroke-width="1.3"/>
<rect x="434.5" y="196.0" width="7.5" height="2" fill="#000"/>
<path d="M468.5 188.5 V201.5 H458.0 V197.0" fill="none" stroke="#000" stroke-width="1.3"/>
<rect x="454.5" y="196.0" width="7.5" height="2" fill="#000"/>
<polygon points="434.5,256.5 451.5,256.5 446,279.5 440,279.5" fill="#00FFFF" stroke="#000" stroke-width="1.3"/>
<polygon points="454.5,256.5 471,256.5 465.5,279.5 459.5,279.5" fill="#00FFFF" stroke="#000" stroke-width="1.3"/>
<polygon points="441.5,280 464.5,280 455.5,299 449,299" fill="#00FFFF" stroke="#000" stroke-width="1.3"/>
<circle cx="452.5" cy="305" r="4.5" fill="#00FFFF" stroke="#000" stroke-width="1.3"/>
<circle cx="452.5" cy="305" r="2" fill="#00FFFF" stroke="#000" stroke-width="1"/>
<rect x="448.0" y="309.5" width="9" height="3" fill="#00FFFF" stroke="#000" stroke-width="1"/>
<text x="427" y="187" font-family="Liberation Sans" font-size="11" font-weight="normal" fill="#fff" text-anchor="middle" >A1</text>
<path d="M480.5 283.5 V271 Q481 264 489 263 H498 V283.5 Z" fill="#00FFFF" stroke="#000" stroke-width="1.3"/>
<polygon points="498,262.5 504.5,262.5 504.5,267 498,283" fill="#00FFFF" stroke="#000" stroke-width="1.3"/>
<circle cx="489.5" cy="273.5" r="4.3" fill="#00FFFF" stroke="#000" stroke-width="1.5"/>
<rect x="480" y="284" width="18" height="2.5" fill="#000"/>
<rect x="480.5" y="286.5" width="17" height="2.5" fill="#00FFFF" stroke="#000" stroke-width="1"/>
<rect x="464.5" y="325.5" width="34" height="73" fill="#00FFFF" stroke="#000" stroke-width="1.3"/>
<rect x="465" y="337" width="33" height="1" fill="#000"/>
<rect x="494.5" y="328.5" width="5" height="10" fill="#00FFFF" stroke="#000" stroke-width="1"/>
<path d="M472.5 341 V355 L498 368" fill="none" stroke="#000" stroke-width="1.2"/>
<rect x="472" y="341" width="26" height="1" fill="#000"/>
<rect x="466.5" y="398.5" width="4" height="3" fill="#00FFFF" stroke="#000" stroke-width="1"/>
<rect x="492.5" y="398.5" width="4" height="3" fill="#00FFFF" stroke="#000" stroke-width="1"/>
<polygon points="464.5,401.5 498.5,401.5 483.5,437 479.5,437" fill="#00FFFF" stroke="#000" stroke-width="1.3"/>
<rect x="464.5" y="463.5" width="34" height="73" fill="#00FFFF" stroke="#000" stroke-width="1.3"/>
<rect x="465" y="475" width="33" height="1" fill="#000"/>
<rect x="494.5" y="466.5" width="5" height="10" fill="#00FFFF" stroke="#000" stroke-width="1"/>
<path d="M472.5 479 V493 L498 506" fill="none" stroke="#000" stroke-width="1.2"/>
<rect x="472" y="479" width="26" height="1" fill="#000"/>
<rect x="466.5" y="536.5" width="4" height="3" fill="#00FFFF" stroke="#000" stroke-width="1"/>
<rect x="492.5" y="536.5" width="4" height="3" fill="#00FFFF" stroke="#000" stroke-width="1"/>
<polygon points="464.5,539.5 498.5,539.5 483.5,575 479.5,575" fill="#00FFFF" stroke="#000" stroke-width="1.3"/>
<circle cx="481.5" cy="442" r="4.5" fill="#00FFFF" stroke="#000" stroke-width="1.3"/>
<circle cx="481.5" cy="442" r="2" fill="#00FFFF" stroke="#000" stroke-width="1"/>
<rect x="477.0" y="446.5" width="9" height="3" fill="#00FFFF" stroke="#000" stroke-width="1"/>
<circle cx="481.5" cy="580" r="4.5" fill="#00FFFF" stroke="#000" stroke-width="1.3"/>
<circle cx="481.5" cy="580" r="2" fill="#00FFFF" stroke="#000" stroke-width="1"/>
<rect x="477.0" y="584.5" width="9" height="3" fill="#00FFFF" stroke="#000" stroke-width="1"/>
<text x="455" y="335" font-family="Liberation Sans" font-size="11" font-weight="normal" fill="#fff" text-anchor="middle" >A2</text>
<text x="455" y="475" font-family="Liberation Sans" font-size="11" font-weight="normal" fill="#fff" text-anchor="middle" >A3</text>
<path d="M505.5 411.5 V399 Q506 392 514 391 H523 V411.5 Z" fill="#00FFFF" stroke="#000" stroke-width="1.3"/>
<polygon points="523,390.5 529.5,390.5 529.5,395 523,411" fill="#00FFFF" stroke="#000" stroke-width="1.3"/>
<circle cx="514.5" cy="401.5" r="4.3" fill="#00FFFF" stroke="#000" stroke-width="1.5"/>
<rect x="505" y="412" width="18" height="2.5" fill="#000"/>
<rect x="505.5" y="414.5" width="17" height="2.5" fill="#00FFFF" stroke="#000" stroke-width="1"/>
<path d="M505.5 551.5 V539 Q506 532 514 531 H523 V551.5 Z" fill="#00FFFF" stroke="#000" stroke-width="1.3"/>
<polygon points="523,530.5 529.5,530.5 529.5,535 523,551" fill="#00FFFF" stroke="#000" stroke-width="1.3"/>
<circle cx="514.5" cy="541.5" r="4.3" fill="#00FFFF" stroke="#000" stroke-width="1.5"/>
<rect x="505" y="552" width="18" height="2.5" fill="#000"/>
<rect x="505.5" y="554.5" width="17" height="2.5" fill="#00FFFF" stroke="#000" stroke-width="1"/>
<polygon points="529.5,116.5 534,116.5 534,118 539.5,118 539.5,124.5 536,124.5 536,122.5 529.5,122.5" fill="#00FFFF" stroke="#000" stroke-width="1.3"/>
<rect x="533.5" y="125.5" width="10" height="18" fill="#00FFFF" stroke="#000" stroke-width="1.3"/>
<rect x="537" y="127" width="3" height="6" fill="#000"/>
<rect x="534" y="133" width="3" height="6" fill="#000"/>
<rect x="536" y="133" width="4" height="2" fill="#000"/>
<rect x="531.5" y="143" width="2" height="21" fill="#000"/>
<rect x="543" y="143" width="2" height="21" fill="#000"/>
<polygon points="535.5,143.5 541.5,143.5 540,148 537,148" fill="#00FFFF" stroke="#000" stroke-width="1"/>
<rect x="530.5" y="148.5" width="3" height="13" fill="#00FFFF" stroke="#000" stroke-width="1"/>
<rect x="535.5" y="150.5" width="21" height="8" fill="#00FFFF" stroke="#000" stroke-width="1.2"/>
<rect x="536" y="154" width="20" height="1" fill="#000"/>
<rect x="556.5" y="147.5" width="26" height="16" fill="#00FFFF" stroke="#000" stroke-width="1.3"/>
<rect x="557" y="150.5" width="25" height="1" fill="#000"/>
<rect x="557" y="153.7" width="25" height="1" fill="#000"/>
<rect x="557" y="156.9" width="25" height="1" fill="#000"/>
<rect x="557" y="160.1" width="25" height="1" fill="#000"/>
<rect x="582.5" y="146.5" width="5" height="17" fill="#00FFFF" stroke="#000" stroke-width="1.3"/>
<polygon points="583.5,163.5 587.5,163.5 587.5,166 585.5,168.5 583.5,166" fill="#00FFFF" stroke="#000" stroke-width="1"/>
<rect x="532" y="97" width="1" height="19" fill="#F0F0F0"/>
<rect x="592.5" y="131.5" width="58" height="11" fill="#C0C0C0" stroke="#000" stroke-width="1.3"/>
<rect x="592.5" y="147.5" width="58" height="12" fill="#66FFFF" stroke="#000" stroke-width="1.3"/>
<text x="657" y="141" font-family="Liberation Sans" font-size="11" font-weight="normal" fill="#fff" text-anchor="start" >%</text>
<text x="657" y="157" font-family="Liberation Sans" font-size="11" font-weight="normal" fill="#fff" text-anchor="start" >л/ч</text>
<rect x="585" y="168" width="1" height="9" fill="#F0F0F0"/>
<rect x="584" y="176" width="1" height="9" fill="#00FFFF"/>
<rect x="662" y="179" width="1" height="9" fill="#00FFFF"/>
<rect x="584" y="180" width="75" height="1" fill="#00FFFF"/>
<rect x="584" y="183" width="75" height="1" fill="#00FFFF"/>
<path d="M586 182.5 L588 185.5 L590 185.5 L595 177 L596 176.5 L598.5 180 M598 182.5 L600 185.5 L602 185.5 L607 177 L608 176.5 L610.5 180 M610 182.5 L612 185.5 L614 185.5 L619 177 L620 176.5 L622.5 180 M622 182.5 L624 185.5 L626 185.5 L631 177 L632 176.5 L634.5 180 M634 182.5 L636 185.5 L638 185.5 L643 177 L644 176.5 L646.5 180 M646 182.5 L648 185.5 L650 185.5 L655 177 L656 176.5 L658.5 180 " fill="none" stroke="#00FFFF" stroke-width="1.1"/>
<rect x="655.5" y="178.5" width="5" height="5" fill="#00FFFF" stroke="#000" stroke-width="1.3"/>
<rect x="605" y="188" width="1" height="6" fill="#F0F0F0"/>
<rect x="602.5" y="202" width="4.5" height="2" fill="#00FFFF"/>
<rect x="601.5" y="205" width="7" height="2" fill="#FFFF00"/>
<rect x="607.0" y="205" width="1.5" height="4" fill="#FFFF00"/>
<rect x="602.5" y="207.8" width="4.5" height="2" fill="#00FFFF"/>
<rect x="621" y="188" width="1" height="6" fill="#F0F0F0"/>
<rect x="618.5" y="202" width="4.5" height="2" fill="#00FFFF"/>
<rect x="617.5" y="205" width="7" height="2" fill="#FFFF00"/>
<rect x="623.0" y="205" width="1.5" height="4" fill="#FFFF00"/>
<rect x="618.5" y="207.8" width="4.5" height="2" fill="#00FFFF"/>
<rect x="640" y="188" width="1" height="6" fill="#F0F0F0"/>
<rect x="637.5" y="202" width="4.5" height="2" fill="#00FFFF"/>
<rect x="636.5" y="205" width="7" height="2" fill="#FFFF00"/>
<rect x="642.0" y="205" width="1.5" height="4" fill="#FFFF00"/>
<rect x="637.5" y="207.8" width="4.5" height="2" fill="#00FFFF"/>
<rect x="651" y="188" width="1" height="26" fill="#F0F0F0"/>
<polygon points="591,224 598,214 629,214 622,224" fill="#3F9898"/>
<polygon points="622,224 629,214 629,557 622,565" fill="#5CE0E0"/>
<rect x="591" y="224" width="31" height="341" fill="#4EC3C3"/>
<polygon points="591,565 622,565 606.5,575" fill="#44A6A6"/>
<polygon points="624,224 631,214 662,214 655,224" fill="#3F9898"/>
<polygon points="655,224 662,214 662,557 655,565" fill="#5CE0E0"/>
<rect x="624" y="224" width="31" height="341" fill="#4EC3C3"/>
<polygon points="624,565 655,565 639.5,575" fill="#44A6A6"/>
<rect x="622" y="398" width="6" height="159" fill="#5CE0E0"/>
<polygon points="622,557 628,557 624,565 622,565" fill="#5CE0E0"/>
<rect x="628" y="398" width="27" height="167" fill="#4EC3C3"/>
<polygon points="624,565 655,565 639.5,575" fill="#44A6A6"/>
<rect x="601.5" y="232.5" width="9" height="5" fill="#00FFFF" stroke="#000" stroke-width="1"/>
<rect x="601.5" y="267.5" width="9" height="5" fill="#00FFFF" stroke="#000" stroke-width="1"/>
<rect x="601.5" y="302.5" width="9" height="5" fill="#00FFFF" stroke="#000" stroke-width="1"/>
<rect x="601.5" y="337.5" width="9" height="5" fill="#00FFFF" stroke="#000" stroke-width="1"/>
<rect x="601.5" y="372.5" width="9" height="5" fill="#00FFFF" stroke="#000" stroke-width="1"/>
<rect x="601.5" y="410.5" width="9" height="5" fill="#00FFFF" stroke="#000" stroke-width="1"/>
<rect x="601.5" y="445.5" width="9" height="5" fill="#00FFFF" stroke="#000" stroke-width="1"/>
<rect x="601.5" y="480.5" width="9" height="5" fill="#00FFFF" stroke="#000" stroke-width="1"/>
<rect x="601.5" y="515.5" width="9" height="5" fill="#00FFFF" stroke="#000" stroke-width="1"/>
<rect x="601.5" y="550.5" width="9" height="5" fill="#00FFFF" stroke="#000" stroke-width="1"/>
<rect x="634.5" y="232.5" width="9" height="5" fill="#00FFFF" stroke="#000" stroke-width="1"/>
<rect x="634.5" y="267.5" width="9" height="5" fill="#00FFFF" stroke="#000" stroke-width="1"/>
<rect x="634.5" y="302.5" width="9" height="5" fill="#00FFFF" stroke="#000" stroke-width="1"/>
<rect x="634.5" y="337.5" width="9" height="5" fill="#00FFFF" stroke="#000" stroke-width="1"/>
<rect x="634.5" y="372.5" width="9" height="5" fill="#00FFFF" stroke="#000" stroke-width="1"/>
<rect x="634.5" y="410.5" width="9" height="5" fill="#00FFFF" stroke="#000" stroke-width="1"/>
<rect x="634.5" y="445.5" width="9" height="5" fill="#00FFFF" stroke="#000" stroke-width="1"/>
<rect x="634.5" y="480.5" width="9" height="5" fill="#00FFFF" stroke="#000" stroke-width="1"/>
<rect x="634.5" y="515.5" width="9" height="5" fill="#00FFFF" stroke="#000" stroke-width="1"/>
<rect x="634.5" y="550.5" width="9" height="5" fill="#00FFFF" stroke="#000" stroke-width="1"/>
<rect x="598" y="280" width="18" height="15" fill="#ECE9D8"/>
<path d="M598.5 295 V280.5 H616" stroke="#B8A898" fill="none"/>
<path d="M598 294.5 H615.5 V280" stroke="#fff" fill="none"/>
<text x="607.0" y="291.5" font-family="Liberation Sans" font-size="11" font-weight="normal" fill="#000" text-anchor="middle" >05</text>
<rect x="631" y="280" width="18" height="15" fill="#ECE9D8"/>
<path d="M631.5 295 V280.5 H649" stroke="#B8A898" fill="none"/>
<path d="M631 294.5 H648.5 V280" stroke="#fff" fill="none"/>
<text x="640.0" y="291.5" font-family="Liberation Sans" font-size="11" font-weight="normal" fill="#000" text-anchor="middle" >06</text>
<polygon points="718,267 725,259 756,259 749,267" fill="#3F9898"/>
<polygon points="749,267 756,259 756,550 749,558" fill="#5CE0E0"/>
<rect x="718" y="267" width="31" height="291" fill="#4EC3C3"/>
<polygon points="718,558 749,558 733.5,566" fill="#44A6A6"/>
<polygon points="756,267 763,259 789,259 782,267" fill="#3F9898"/>
<polygon points="782,267 789,259 789,550 782,558" fill="#5CE0E0"/>
<rect x="756" y="267" width="26" height="291" fill="#4EC3C3"/>
<polygon points="756,558 782,558 769.0,566" fill="#44A6A6"/>
<rect x="729.5" y="274.5" width="9" height="5" fill="#00FFFF" stroke="#000" stroke-width="1"/>
<rect x="729.5" y="363.5" width="9" height="5" fill="#00FFFF" stroke="#000" stroke-width="1"/>
<rect x="729.5" y="459.5" width="9" height="5" fill="#00FFFF" stroke="#000" stroke-width="1"/>
<rect x="729.5" y="546.5" width="9" height="5" fill="#00FFFF" stroke="#000" stroke-width="1"/>
<rect x="761.5" y="274.5" width="9" height="5" fill="#00FFFF" stroke="#000" stroke-width="1"/>
<rect x="761.5" y="363.5" width="9" height="5" fill="#00FFFF" stroke="#000" stroke-width="1"/>
<rect x="761.5" y="459.5" width="9" height="5" fill="#00FFFF" stroke="#000" stroke-width="1"/>
<rect x="761.5" y="546.5" width="9" height="5" fill="#00FFFF" stroke="#000" stroke-width="1"/>
<rect x="725" y="322" width="18" height="15" fill="#ECE9D8"/>
<path d="M725.5 337 V322.5 H743" stroke="#B8A898" fill="none"/>
<path d="M725 336.5 H742.5 V322" stroke="#fff" fill="none"/>
<text x="734.0" y="333.5" font-family="Liberation Sans" font-size="11" font-weight="normal" fill="#000" text-anchor="middle" >07</text>
<rect x="758" y="322" width="18" height="15" fill="#ECE9D8"/>
<path d="M758.5 337 V322.5 H776" stroke="#B8A898" fill="none"/>
<path d="M758 336.5 H775.5 V322" stroke="#fff" fill="none"/>
<text x="767.0" y="333.5" font-family="Liberation Sans" font-size="11" font-weight="normal" fill="#000" text-anchor="middle" >08</text>
<polygon points="838,320 844,314 875,314 869,320" fill="#3F9898"/>
<polygon points="869,320 875,314 875,405 869,412" fill="#5CE0E0"/>
<rect x="838" y="320" width="31" height="92" fill="#4EC3C3"/>
<polygon points="838,412 869,412 853.5,417" fill="#44A6A6"/>
<rect x="849.5" y="324.5" width="9" height="5" fill="#00FFFF" stroke="#000" stroke-width="1"/>
<rect x="849.5" y="362.5" width="9" height="5" fill="#00FFFF" stroke="#000" stroke-width="1"/>
<rect x="849.5" y="400.5" width="9" height="5" fill="#00FFFF" stroke="#000" stroke-width="1"/>
<rect x="842.5" y="336.5" width="23" height="17" fill="none" stroke="#2E8888" stroke-width="1"/>
<text x="854" y="351" font-family="Liberation Sans" font-size="13.5" font-weight="bold" fill="#fff" text-anchor="middle" letter-spacing="0.5">12</text>
<polygon points="948,419 955,411 986,411 979,419" fill="#3F9898"/>
<polygon points="979,419 986,411 986,550 979,558" fill="#5CE0E0"/>
<rect x="948" y="419" width="31" height="139" fill="#4EC3C3"/>
<polygon points="948,558 979,558 963.5,566" fill="#44A6A6"/>
<polygon points="981,419 988,411 1019,411 1012,419" fill="#3F9898"/>
<polygon points="1012,419 1019,411 1019,550 1012,558" fill="#5CE0E0"/>
<rect x="981" y="419" width="31" height="139" fill="#4EC3C3"/>
<polygon points="981,558 1012,558 996.5,566" fill="#44A6A6"/>
<rect x="952" y="433" width="25" height="111" fill="#5AB8B8"/>
<rect x="985" y="433" width="25" height="111" fill="#5AB8B8"/>
<rect x="952" y="526" width="25" height="18" fill="#BDEFF3"/>
<rect x="985" y="521" width="25" height="23" fill="#BDEFF3"/>
<rect x="959.5" y="425.5" width="9" height="5" fill="#00FFFF" stroke="#000" stroke-width="1"/>
<rect x="959.5" y="552.5" width="9" height="5" fill="#00FFFF" stroke="#000" stroke-width="1"/>
<rect x="992.5" y="425.5" width="9" height="5" fill="#00FFFF" stroke="#000" stroke-width="1"/>
<rect x="992.5" y="552.5" width="9" height="5" fill="#00FFFF" stroke="#000" stroke-width="1"/>
<rect x="955" y="452" width="18" height="15" fill="#ECE9D8"/>
<path d="M955.5 467 V452.5 H973" stroke="#B8A898" fill="none"/>
<path d="M955 466.5 H972.5 V452" stroke="#fff" fill="none"/>
<text x="964.0" y="463.5" font-family="Liberation Sans" font-size="11" font-weight="normal" fill="#000" text-anchor="middle" >09</text>
<rect x="988" y="452" width="18" height="15" fill="#ECE9D8"/>
<path d="M988.5 467 V452.5 H1006" stroke="#B8A898" fill="none"/>
<path d="M988 466.5 H1005.5 V452" stroke="#fff" fill="none"/>
<text x="997.0" y="463.5" font-family="Liberation Sans" font-size="11" font-weight="normal" fill="#000" text-anchor="middle" >10</text>
<rect x="26" y="576" width="8" height="2" fill="#00FFFF"/>
<rect x="22" y="579" width="19" height="2" fill="#FFFF00"/>
<rect x="39" y="579" width="2" height="6" fill="#FFFF00"/>
<rect x="26" y="582" width="8" height="2" fill="#00FFFF"/>
<rect x="59" y="576" width="8" height="2" fill="#00FFFF"/>
<rect x="55" y="579" width="19" height="2" fill="#FFFF00"/>
<rect x="72" y="579" width="2" height="6" fill="#FFFF00"/>
<rect x="59" y="582" width="8" height="2" fill="#00FFFF"/>
<rect x="92" y="576" width="8" height="2" fill="#00FFFF"/>
<rect x="88" y="579" width="19" height="2" fill="#FFFF00"/>
<rect x="105" y="579" width="2" height="6" fill="#FFFF00"/>
<rect x="92" y="582" width="8" height="2" fill="#00FFFF"/>
<rect x="125" y="576" width="8" height="2" fill="#00FFFF"/>
<rect x="121" y="579" width="19" height="2" fill="#FFFF00"/>
<rect x="138" y="579" width="2" height="6" fill="#FFFF00"/>
<rect x="125" y="582" width="8" height="2" fill="#00FFFF"/>
<rect x="30" y="589" width="1" height="18" fill="#F0F0F0"/>
<rect x="63" y="589" width="1" height="18" fill="#F0F0F0"/>
<rect x="96" y="589" width="1" height="18" fill="#F0F0F0"/>
<rect x="129" y="589" width="1" height="18" fill="#F0F0F0"/>
<rect x="729" y="573" width="8" height="2" fill="#00FFFF"/>
<rect x="725" y="576" width="19" height="2" fill="#FFFF00"/>
<rect x="742" y="576" width="2" height="6" fill="#FFFF00"/>
<rect x="729" y="579" width="8" height="2" fill="#00FFFF"/>
<rect x="761" y="573" width="8" height="2" fill="#00FFFF"/>
<rect x="757" y="576" width="19" height="2" fill="#FFFF00"/>
<rect x="774" y="576" width="2" height="6" fill="#FFFF00"/>
<rect x="761" y="579" width="8" height="2" fill="#00FFFF"/>
<rect x="959" y="571" width="8" height="2" fill="#00FFFF"/>
<rect x="955" y="574" width="19" height="2" fill="#FFFF00"/>
<rect x="972" y="574" width="2" height="6" fill="#FFFF00"/>
<rect x="959" y="577" width="8" height="2" fill="#00FFFF"/>
<rect x="993" y="571" width="8" height="2" fill="#00FFFF"/>
<rect x="989" y="574" width="19" height="2" fill="#FFFF00"/>
<rect x="1006" y="574" width="2" height="6" fill="#FFFF00"/>
<rect x="993" y="577" width="8" height="2" fill="#00FFFF"/>
<rect x="735.5" y="247" width="4.5" height="2" fill="#00FFFF"/>
<rect x="734.5" y="250" width="7" height="2" fill="#FFFF00"/>
<rect x="740.0" y="250" width="1.5" height="4" fill="#FFFF00"/>
<rect x="735.5" y="252.8" width="4.5" height="2" fill="#00FFFF"/>
<rect x="738" y="228" width="1" height="14" fill="#F0F0F0"/>
<rect x="5.5" y="612.5" width="11" height="8" fill="#00FFFF" stroke="#000" stroke-width="1.3"/>
<circle cx="11" cy="616.5" r="2.3" fill="#00FFFF" stroke="#000" stroke-width="1"/>
<rect x="16.5" y="613.5" width="135" height="7" fill="#00FFFF" stroke="#000" stroke-width="1.3"/>
<rect x="21.5" y="607.5" width="11" height="6" fill="#00FFFF" stroke="#000" stroke-width="1.3"/>
<path d="M19 618 V616.5 H35 V618" fill="none" stroke="#000" stroke-width="1"/>
<rect x="57.5" y="607.5" width="11" height="6" fill="#00FFFF" stroke="#000" stroke-width="1.3"/>
<path d="M55 618 V616.5 H71 V618" fill="none" stroke="#000" stroke-width="1"/>
<rect x="92.5" y="607.5" width="11" height="6" fill="#00FFFF" stroke="#000" stroke-width="1.3"/>
<path d="M90 618 V616.5 H106 V618" fill="none" stroke="#000" stroke-width="1"/>
<rect x="128.5" y="607.5" width="11" height="6" fill="#00FFFF" stroke="#000" stroke-width="1.3"/>
<path d="M126 618 V616.5 H142 V618" fill="none" stroke="#000" stroke-width="1"/>
<polygon points="151.5,612.5 158,611.5 168.5,611.5 168.5,624.5 165,624.5 162,620.5 151.5,620.5" fill="#00FFFF" stroke="#000" stroke-width="1.3"/>
<rect x="161.5" y="613.5" width="5" height="5" fill="#00FFFF" stroke="#000" stroke-width="1"/>
<rect x="158.5" y="593.5" width="10" height="12" fill="#00FFFF" stroke="#000" stroke-width="1.3"/>
<rect x="160" y="596" width="7" height="2.5" fill="#FF3030"/>
<rect x="160.5" y="600.0" width="1" height="1" fill="#000"/>
<rect x="160.5" y="602.5" width="1" height="1" fill="#000"/>
<rect x="162.8" y="600.0" width="1" height="1" fill="#000"/>
<rect x="162.8" y="602.5" width="1" height="1" fill="#000"/>
<rect x="165.1" y="600.0" width="1" height="1" fill="#000"/>
<rect x="165.1" y="602.5" width="1" height="1" fill="#000"/>
<rect x="166" y="625" width="1" height="67" fill="#F0F0F0"/>
<rect x="172.5" y="611.5" width="59" height="12" fill="#C0C0C0" stroke="#000" stroke-width="1.3"/>
<text x="236" y="622" font-family="Liberation Sans" font-size="11" font-weight="normal" fill="#fff" text-anchor="start" >т/ч</text>
<rect x="52" y="629" width="40" height="20" fill="#ECE9D8"/>
<path d="M52.5 649 V629.5 H92" stroke="#fff" fill="none"/>
<path d="M52 648.5 H91.5 V629" stroke="#9C9888" fill="none" stroke-width="1.5"/>
<text x="72.0" y="644" font-family="Liberation Sans" font-size="11.8" font-weight="bold" fill="#008000" text-anchor="middle" letter-spacing="0.4">вкл</text>
<rect x="96" y="629" width="41" height="20" fill="#ECE9D8"/>
<path d="M96.5 649 V629.5 H137" stroke="#fff" fill="none"/>
<path d="M96 648.5 H136.5 V629" stroke="#9C9888" fill="none" stroke-width="1.5"/>
<text x="116.5" y="644" font-family="Liberation Sans" font-size="11.8" font-weight="bold" fill="#800000" text-anchor="middle" letter-spacing="0.4">выкл</text>
<rect x="586.5" y="579.5" width="6" height="8.5" fill="#00FFFF" stroke="#000" stroke-width="1.3"/>
<rect x="587" y="581.5" width="6" height="1" fill="#000"/>
<rect x="587" y="585.5" width="6" height="1" fill="#000"/>
<rect x="592" y="581" width="1.5" height="5" fill="#000"/>
<path d="M593 574 H620 V587.5 L614.5 593 H598.5 L593 587.5 Z" fill="#000"/>
<rect x="598" y="575.5" width="17" height="3.5" rx="1.5" fill="#00FFFF"/>
<rect x="594.5" y="579.8" width="24" height="1.3" fill="#00FFFF"/>
<rect x="594.5" y="581.9" width="24" height="1.3" fill="#00FFFF"/>
<rect x="599" y="583.8" width="15" height="3.8" rx="1.5" fill="#00FFFF"/>
<polygon points="595.5,588.5 617.5,588.5 613.5,591.8 599.5,591.8" fill="#00FFFF"/>
<rect x="594.5" y="575.5" width="2.5" height="3" fill="#00FFFF"/>
<rect x="616" y="575.5" width="2.5" height="3" fill="#00FFFF"/>
<polygon points="594.5,584 596.5,584 598,587.5 594.5,587.5" fill="#00FFFF"/>
<polygon points="618.5,584 616.5,584 615,587.5 618.5,587.5" fill="#00FFFF"/>
<rect x="622.5" y="579.5" width="6" height="8.5" fill="#00FFFF" stroke="#000" stroke-width="1.3"/>
<rect x="623" y="581.5" width="6" height="1" fill="#000"/>
<rect x="623" y="585.5" width="6" height="1" fill="#000"/>
<rect x="628" y="581" width="1.5" height="5" fill="#000"/>
<path d="M629 574 H656 V587.5 L650.5 593 H634.5 L629 587.5 Z" fill="#000"/>
<rect x="634" y="575.5" width="17" height="3.5" rx="1.5" fill="#00FFFF"/>
<rect x="630.5" y="579.8" width="24" height="1.3" fill="#00FFFF"/>
<rect x="630.5" y="581.9" width="24" height="1.3" fill="#00FFFF"/>
<rect x="635" y="583.8" width="15" height="3.8" rx="1.5" fill="#00FFFF"/>
<polygon points="631.5,588.5 653.5,588.5 649.5,591.8 635.5,591.8" fill="#00FFFF"/>
<rect x="630.5" y="575.5" width="2.5" height="3" fill="#00FFFF"/>
<rect x="652" y="575.5" width="2.5" height="3" fill="#00FFFF"/>
<polygon points="630.5,584 632.5,584 634,587.5 630.5,587.5" fill="#00FFFF"/>
<polygon points="654.5,584 652.5,584 651,587.5 654.5,587.5" fill="#00FFFF"/>
<rect x="606" y="593" width="1" height="34" fill="#F0F0F0"/>
<rect x="642" y="593" width="1" height="34" fill="#F0F0F0"/>
<rect x="600.5" y="627.5" width="12" height="12" fill="#00FFFF" stroke="#000" stroke-width="1.3"/>
<rect x="636.5" y="627.5" width="12" height="12" fill="#00FFFF" stroke="#000" stroke-width="1.3"/>
<rect x="600" y="641" width="1" height="9" fill="#00FFFF"/>
<rect x="647" y="644" width="1" height="9" fill="#00FFFF"/>
<rect x="600" y="645" width="44" height="1" fill="#00FFFF"/>
<rect x="600" y="648" width="44" height="1" fill="#00FFFF"/>
<path d="M602 647.5 L604 650.5 L606 650.5 L611 642 L612 641.5 L614.5 645 M614 647.5 L616 650.5 L618 650.5 L623 642 L624 641.5 L626.5 645 M626 647.5 L628 650.5 L630 650.5 L635 642 L636 641.5 L638.5 645 " fill="none" stroke="#00FFFF" stroke-width="1.1"/>
<rect x="641.5" y="643.5" width="5" height="5" fill="#00FFFF" stroke="#000" stroke-width="1.3"/>
<rect x="622" y="657" width="1" height="15" fill="#F0F0F0"/>
<rect x="619" y="673" width="1" height="9" fill="#00FFFF"/>
<rect x="660" y="676" width="1" height="9" fill="#00FFFF"/>
<rect x="619" y="677" width="38" height="1" fill="#00FFFF"/>
<rect x="619" y="680" width="38" height="1" fill="#00FFFF"/>
<path d="M621 679.5 L623 682.5 L625 682.5 L630 674 L631 673.5 L633.5 677 M633 679.5 L635 682.5 L637 682.5 L642 674 L643 673.5 L645.5 677 M645 679.5 L647 682.5 L649 682.5 L654 674 L655 673.5 L657.5 677 " fill="none" stroke="#00FFFF" stroke-width="1.1"/>
<rect x="655.5" y="675.5" width="5" height="5" fill="#00FFFF" stroke="#000" stroke-width="1.3"/>
<path d="M661.5 683 V692" fill="none" stroke="#F0F0F0" stroke-width="1"/>
<path d="M705.5 97 V121.5 H723.5 V209" fill="none" stroke="#F0F0F0" stroke-width="1"/>
<rect x="722" y="216" width="1" height="9" fill="#00FFFF"/>
<rect x="779" y="219" width="1" height="9" fill="#00FFFF"/>
<rect x="722" y="220" width="54" height="1" fill="#00FFFF"/>
<rect x="722" y="223" width="54" height="1" fill="#00FFFF"/>
<path d="M724 222.5 L726 225.5 L728 225.5 L733 217 L734 216.5 L736.5 220 M736 222.5 L738 225.5 L740 225.5 L745 217 L746 216.5 L748.5 220 M748 222.5 L750 225.5 L752 225.5 L757 217 L758 216.5 L760.5 220 M760 222.5 L762 225.5 L764 225.5 L769 217 L770 216.5 L772.5 220 " fill="none" stroke="#00FFFF" stroke-width="1.1"/>
<rect x="772.5" y="218.5" width="5" height="5" fill="#00FFFF" stroke="#000" stroke-width="1.3"/>
<rect x="734.5" y="187.5" width="9" height="5" fill="#00FFFF" stroke="#000" stroke-width="1.2"/>
<text x="747" y="194" font-family="Liberation Sans" font-size="11" font-weight="normal" fill="#fff" text-anchor="start" >ДНП</text>
<rect x="734.5" y="203.5" width="9" height="5" fill="#00FFFF" stroke="#000" stroke-width="1.2"/>
<text x="747" y="210" font-family="Liberation Sans" font-size="11" font-weight="normal" fill="#fff" text-anchor="start" >Вода</text>
<rect x="772" y="228" width="1" height="31" fill="#F0F0F0"/>
<rect x="832" y="97" width="1" height="43" fill="#F0F0F0"/>
<rect x="850.0" y="109.5" width="3.5" height="15.5" fill="#00FFFF" stroke="#000" stroke-width="1"/>
<rect x="850.5" y="114.0" width="3.0" height="1" fill="#000"/>
<rect x="850.5" y="117.5" width="3.0" height="1" fill="#000"/>
<rect x="850.5" y="121.0" width="3.0" height="1" fill="#000"/>
<polygon points="836.0,134 838.5,126.5 856.0,125.5 856.0,164 836.0,164" fill="#00FFFF" stroke="#000" stroke-width="1.3"/>
<polygon points="832.5,144 836.0,140.5 839.5,144 836.0,147.5" fill="#00FFFF" stroke="#000" stroke-width="1"/>
<path d="M836.5 139 L849.5 156 M856.0 135 L850.0 154 M838.5 162 L840.5 158" fill="none" stroke="#000" stroke-width="1.1"/>
<path d="M844.5 129 Q850.5 127 850.5 134" fill="none" stroke="#000" stroke-width="1.2"/>
<path d="M838.0 124 L844.0 135" stroke="#000" stroke-width="4" stroke-linecap="round"/>
<rect x="836.0" y="160.5" width="14" height="3.5" fill="#00FFFF" stroke="#000" stroke-width="1"/>
<rect x="850.0" y="125.5" width="6.5" height="52" fill="#00FFFF" stroke="#000" stroke-width="1.3"/>
<rect x="849.0" y="155.5" width="4" height="4" fill="#00FFFF" stroke="#000" stroke-width="1"/>
<rect x="850.0" y="177.5" width="6.5" height="6" fill="#00FFFF" stroke="#000" stroke-width="1.2"/>
<rect x="851.0" y="183.5" width="4.5" height="5.5" fill="#00FFFF" stroke="#000" stroke-width="1.2"/>
<rect x="860.5" y="104.5" width="12" height="12" fill="#00FFFF" stroke="#000" stroke-width="1.3"/>
<rect x="860.5" y="124.5" width="12" height="12" fill="#00FFFF" stroke="#000" stroke-width="1.3"/>
<rect x="860.5" y="145.5" width="12" height="12" fill="#00FFFF" stroke="#000" stroke-width="1.3"/>
<rect x="855" y="189" width="1" height="86" fill="#F0F0F0"/>
<rect x="862.5" y="245.5" width="9" height="5" fill="#00FFFF" stroke="#000" stroke-width="1.2"/>
<text x="875" y="252" font-family="Liberation Sans" font-size="11" font-weight="normal" fill="#fff" text-anchor="start" >ДНП</text>
<rect x="862.5" y="261.5" width="9" height="5" fill="#00FFFF" stroke="#000" stroke-width="1.2"/>
<text x="875" y="268" font-family="Liberation Sans" font-size="11" font-weight="normal" fill="#fff" text-anchor="start" >Вода</text>
<rect x="850" y="275" width="1" height="9" fill="#00FFFF"/>
<rect x="905" y="278" width="1" height="9" fill="#00FFFF"/>
<rect x="850" y="279" width="52" height="1" fill="#00FFFF"/>
<rect x="850" y="282" width="52" height="1" fill="#00FFFF"/>
<path d="M852 281.5 L854 284.5 L856 284.5 L861 276 L862 275.5 L864.5 279 M864 281.5 L866 284.5 L868 284.5 L873 276 L874 275.5 L876.5 279 M876 281.5 L878 284.5 L880 284.5 L885 276 L886 275.5 L888.5 279 M888 281.5 L890 284.5 L892 284.5 L897 276 L898 275.5 L900.5 279 " fill="none" stroke="#00FFFF" stroke-width="1.1"/>
<rect x="898.5" y="277.5" width="5" height="5" fill="#00FFFF" stroke="#000" stroke-width="1.3"/>
<path d="M896.5 287 V298.5 H860.5 V314" fill="none" stroke="#F0F0F0" stroke-width="1"/>
<path d="M956.5 288 V333" fill="none" stroke="#F0F0F0" stroke-width="1"/>
<rect x="952" y="334" width="1" height="9" fill="#00FFFF"/>
<rect x="1007" y="337" width="1" height="9" fill="#00FFFF"/>
<rect x="952" y="338" width="52" height="1" fill="#00FFFF"/>
<rect x="952" y="341" width="52" height="1" fill="#00FFFF"/>
<path d="M954 340.5 L956 343.5 L958 343.5 L963 335 L964 334.5 L966.5 338 M966 340.5 L968 343.5 L970 343.5 L975 335 L976 334.5 L978.5 338 M978 340.5 L980 343.5 L982 343.5 L987 335 L988 334.5 L990.5 338 M990 340.5 L992 343.5 L994 343.5 L999 335 L1000 334.5 L1002.5 338 " fill="none" stroke="#00FFFF" stroke-width="1.1"/>
<rect x="999.5" y="336.5" width="5" height="5" fill="#00FFFF" stroke="#000" stroke-width="1.3"/>
<text x="923" y="364" font-family="Liberation Sans" font-size="11" font-weight="normal" fill="#fff" text-anchor="middle" >Отходы</text>
<text x="923" y="377" font-family="Liberation Sans" font-size="11" font-weight="normal" fill="#fff" text-anchor="middle" >сепарирования</text>
<rect x="912" y="379" width="1" height="6" fill="#F0F0F0"/>
<rect x="909" y="385" width="1" height="9" fill="#00FFFF"/>
<rect x="956" y="388" width="1" height="9" fill="#00FFFF"/>
<rect x="909" y="389" width="44" height="1" fill="#00FFFF"/>
<rect x="909" y="392" width="44" height="1" fill="#00FFFF"/>
<path d="M911 391.5 L913 394.5 L915 394.5 L920 386 L921 385.5 L923.5 389 M923 391.5 L925 394.5 L927 394.5 L932 386 L933 385.5 L935.5 389 M935 391.5 L937 394.5 L939 394.5 L944 386 L945 385.5 L947.5 389 " fill="none" stroke="#00FFFF" stroke-width="1.1"/>
<rect x="948.5" y="387.5" width="5" height="5" fill="#00FFFF" stroke="#000" stroke-width="1.3"/>
<path d="M947.5 396 V399.5 H968.5 V411" fill="none" stroke="#F0F0F0" stroke-width="1"/>
<path d="M1000.5 346 V411" fill="none" stroke="#F0F0F0" stroke-width="1"/>
<rect x="857" y="418" width="1" height="15" fill="#F0F0F0"/>
<rect x="851.5" y="433.5" width="11" height="11" fill="#00FFFF" stroke="#000" stroke-width="1.3"/>
<rect x="850.5" y="444.5" width="13" height="2" fill="#00FFFF" stroke="#000" stroke-width="1"/>
<rect x="851.5" y="446.5" width="5" height="8" fill="#00FFFF" stroke="#000" stroke-width="1.2"/>
<rect x="857.5" y="446.5" width="5" height="8" fill="#00FFFF" stroke="#000" stroke-width="1.2"/>
<rect x="857" y="456" width="1" height="16" fill="#F0F0F0"/>
<text x="817" y="487" font-family="Liberation Sans" font-size="11" font-weight="normal" fill="#fff" text-anchor="start" >На 1-ую дранную</text>
<rect x="828.5" y="495.5" width="59" height="12" fill="#C0C0C0" stroke="#000" stroke-width="1.3"/>
<rect x="828.5" y="511.5" width="59" height="12" fill="#C0C0C0" stroke="#000" stroke-width="1.3"/>
<text x="894" y="505" font-family="Liberation Sans" font-size="11" font-weight="normal" fill="#fff" text-anchor="start" >т/ч</text>
<text x="894" y="521" font-family="Liberation Sans" font-size="11" font-weight="normal" fill="#fff" text-anchor="start" >т</text>
<rect x="733" y="585" width="1" height="15" fill="#F0F0F0"/>
<rect x="765" y="585" width="1" height="15" fill="#F0F0F0"/>
<rect x="715" y="600" width="1" height="9" fill="#00FFFF"/>
<rect x="785" y="603" width="1" height="9" fill="#00FFFF"/>
<rect x="715" y="604" width="67" height="1" fill="#00FFFF"/>
<rect x="715" y="607" width="67" height="1" fill="#00FFFF"/>
<path d="M717 606.5 L719 609.5 L721 609.5 L726 601 L727 600.5 L729.5 604 M729 606.5 L731 609.5 L733 609.5 L738 601 L739 600.5 L741.5 604 M741 606.5 L743 609.5 L745 609.5 L750 601 L751 600.5 L753.5 604 M753 606.5 L755 609.5 L757 609.5 L762 601 L763 600.5 L765.5 604 M765 606.5 L767 609.5 L769 609.5 L774 601 L775 600.5 L777.5 604 " fill="none" stroke="#00FFFF" stroke-width="1.1"/>
<rect x="716.5" y="602.5" width="5" height="5" fill="#00FFFF" stroke="#000" stroke-width="1.3"/>
<rect x="718" y="610" width="1" height="13" fill="#F0F0F0"/>
<rect x="714.5" y="626.5" width="38" height="17" fill="#00FFFF" stroke="#000" stroke-width="1.3"/>
<rect x="721" y="629.5" width="24.5" height="11" fill="#00FFFF" stroke="#000" stroke-width="1.3"/>
<rect x="709.5" y="629.5" width="5" height="28" fill="#00FFFF" stroke="#000" stroke-width="1.2"/>
<polygon points="723.5,643.5 742.5,643.5 735.5,654.5 730.5,654.5" fill="#00FFFF" stroke="#000" stroke-width="1.2"/>
<rect x="731" y="654.5" width="4" height="2" fill="#00FFFF" stroke="#000" stroke-width="0.8"/>
<rect x="749" y="643.5" width="3.5" height="18.5" fill="#00FFFF" stroke="#000" stroke-width="1.2"/>
<polygon points="712.5,649 715,644.5 718,644.5 718,661.5 712.5,661.5" fill="#00FFFF" stroke="#000" stroke-width="1.2"/>
<rect x="718.5" y="651.5" width="8" height="10" fill="#00FFFF" stroke="#000" stroke-width="1.2"/>
<rect x="716.5" y="648.5" width="2.5" height="3" fill="#00FFFF" stroke="#000" stroke-width="0.8"/>
<rect x="715.5" y="623.5" width="5" height="3" fill="#00FFFF" stroke="#000" stroke-width="1"/>
<rect x="752.5" y="632.5" width="2" height="5" fill="#00FFFF" stroke="#000" stroke-width="0.8"/>
<path d="M751.5 662 V677.5 H789 V690" fill="none" stroke="#F0F0F0" stroke-width="1"/>
<text x="871" y="635" font-family="Liberation Sans" font-size="11" font-weight="normal" fill="#fff" text-anchor="middle" >Отходы очистки</text>
<rect x="846" y="640" width="1" height="10" fill="#F0F0F0"/>
<rect x="862" y="640" width="1" height="10" fill="#F0F0F0"/>
<rect x="878" y="640" width="1" height="10" fill="#F0F0F0"/>
<rect x="894" y="640" width="1" height="10" fill="#F0F0F0"/>
<rect x="835" y="651" width="1" height="9" fill="#00FFFF"/>
<rect x="903" y="654" width="1" height="9" fill="#00FFFF"/>
<rect x="835" y="655" width="65" height="1" fill="#00FFFF"/>
<rect x="835" y="658" width="65" height="1" fill="#00FFFF"/>
<path d="M837 657.5 L839 660.5 L841 660.5 L846 652 L847 651.5 L849.5 655 M849 657.5 L851 660.5 L853 660.5 L858 652 L859 651.5 L861.5 655 M861 657.5 L863 660.5 L865 660.5 L870 652 L871 651.5 L873.5 655 M873 657.5 L875 660.5 L877 660.5 L882 652 L883 651.5 L885.5 655 M885 657.5 L887 660.5 L889 660.5 L894 652 L895 651.5 L897.5 655 " fill="none" stroke="#00FFFF" stroke-width="1.1"/>
<rect x="897.5" y="653.5" width="5" height="5" fill="#00FFFF" stroke="#000" stroke-width="1.3"/>
<polygon points="839,654 842,657 839,660 836,657" fill="#00FFFF" stroke="#000"/>
<path d="M903.5 663 V670.5 H912.5 V690" fill="none" stroke="#F0F0F0" stroke-width="1"/>
<polygon points="1001,68.5 1011,68.5 1014.5,73 1014.5,82.5 1018,86.5 1018,88.5 1011,88.5 1008,92.5 1005,88.5 994,88.5 994,86.5 998,82.5 998,73" fill="#00FFFF"/>
<path d="M994.5 88 V86.5 L998.5 82.5 V73 L1001.5 68.5 H1011 M1005.5 88.5 V90 L1008 92.5" fill="none" stroke="#000" stroke-width="1.2"/>
<path d="M1011 68.5 L1014.5 73 V82.5 L1018 86.5 V89 H1008.5 L1011 89 M994 89 H1005 M1008 92.5 L1011 89" fill="none" stroke="#fff" stroke-width="1.2"/>
<g transform="translate(50.5 0) scale(-1 1)">
<path d="M31.5 704 Q31.5 698.5 37.0 698.5 Q43.0 698.5 43.0 705 V710 Q43.0 714.5 38.5 716.5" fill="none" stroke="#000" stroke-width="3"/>
<path d="M31.5 704 Q31.5 698.5 37.0 698.5 Q43.0 698.5 43.0 705 V710 Q43.0 714.5 38.5 716.5" fill="none" stroke="#00FFFF" stroke-width="1.3"/>
<rect x="9.0" y="712.5" width="4" height="3.5" fill="#00FFFF" stroke="#000" stroke-width="1"/>
<rect x="13.0" y="711.5" width="25" height="5.5" fill="#00FFFF" stroke="#000" stroke-width="1.3"/>
<circle cx="18.0" cy="708.3" r="3" fill="#00FFFF" stroke="#000" stroke-width="1"/>
<circle cx="32.0" cy="708" r="3.8" fill="#00FFFF" stroke="#000" stroke-width="1"/>
</g>
<g transform="translate(128.7 0) scale(-1 1)">
<path d="M70.6 704 Q70.6 698.5 76.1 698.5 Q82.1 698.5 82.1 705 V710 Q82.1 714.5 77.6 716.5" fill="none" stroke="#000" stroke-width="3"/>
<path d="M70.6 704 Q70.6 698.5 76.1 698.5 Q82.1 698.5 82.1 705 V710 Q82.1 714.5 77.6 716.5" fill="none" stroke="#00FFFF" stroke-width="1.3"/>
<rect x="48.1" y="712.5" width="4" height="3.5" fill="#00FFFF" stroke="#000" stroke-width="1"/>
<rect x="52.1" y="711.5" width="25" height="5.5" fill="#00FFFF" stroke="#000" stroke-width="1.3"/>
<circle cx="57.1" cy="708.3" r="3" fill="#00FFFF" stroke="#000" stroke-width="1"/>
<circle cx="71.1" cy="708" r="3.8" fill="#00FFFF" stroke="#000" stroke-width="1"/>
</g>
<g>
<path d="M148.7 704 Q148.7 698.5 154.2 698.5 Q160.2 698.5 160.2 705 V710 Q160.2 714.5 155.7 716.5" fill="none" stroke="#000" stroke-width="3"/>
<path d="M148.7 704 Q148.7 698.5 154.2 698.5 Q160.2 698.5 160.2 705 V710 Q160.2 714.5 155.7 716.5" fill="none" stroke="#00FFFF" stroke-width="1.3"/>
<rect x="126.19999999999999" y="712.5" width="4" height="3.5" fill="#00FFFF" stroke="#000" stroke-width="1"/>
<rect x="130.2" y="711.5" width="25" height="5.5" fill="#00FFFF" stroke="#000" stroke-width="1.3"/>
<circle cx="135.2" cy="708.3" r="3" fill="#00FFFF" stroke="#000" stroke-width="1"/>
<circle cx="149.2" cy="708" r="3.8" fill="#00FFFF" stroke="#000" stroke-width="1"/>
</g>
<g>
<path d="M234.1 704 Q234.1 698.5 239.6 698.5 Q245.6 698.5 245.6 705 V710 Q245.6 714.5 241.1 716.5" fill="none" stroke="#000" stroke-width="3"/>
<path d="M234.1 704 Q234.1 698.5 239.6 698.5 Q245.6 698.5 245.6 705 V710 Q245.6 714.5 241.1 716.5" fill="none" stroke="#00FFFF" stroke-width="1.3"/>
<rect x="211.6" y="712.5" width="4" height="3.5" fill="#00FFFF" stroke="#000" stroke-width="1"/>
<rect x="215.6" y="711.5" width="25" height="5.5" fill="#00FFFF" stroke="#000" stroke-width="1.3"/>
<circle cx="220.6" cy="708.3" r="3" fill="#00FFFF" stroke="#000" stroke-width="1"/>
<circle cx="234.6" cy="708" r="3.8" fill="#00FFFF" stroke="#000" stroke-width="1"/>
</g>
<g>
<path d="M278.5 704 Q278.5 698.5 284.0 698.5 Q290.0 698.5 290.0 705 V710 Q290.0 714.5 285.5 716.5" fill="none" stroke="#000" stroke-width="3"/>
<path d="M278.5 704 Q278.5 698.5 284.0 698.5 Q290.0 698.5 290.0 705 V710 Q290.0 714.5 285.5 716.5" fill="none" stroke="#00FFFF" stroke-width="1.3"/>
<rect x="256.0" y="712.5" width="4" height="3.5" fill="#00FFFF" stroke="#000" stroke-width="1"/>
<rect x="260.0" y="711.5" width="25" height="5.5" fill="#00FFFF" stroke="#000" stroke-width="1.3"/>
<circle cx="265.0" cy="708.3" r="3" fill="#00FFFF" stroke="#000" stroke-width="1"/>
<circle cx="279.0" cy="708" r="3.8" fill="#00FFFF" stroke="#000" stroke-width="1"/>
</g>
<text x="23.8" y="692" font-family="Liberation Sans" font-size="12" font-weight="bold" fill="#fff" text-anchor="middle" >1</text>
<text x="59.4" y="692" font-family="Liberation Sans" font-size="12" font-weight="bold" fill="#fff" text-anchor="middle" >2</text>
<text x="142.7" y="692" font-family="Liberation Sans" font-size="12" font-weight="bold" fill="#fff" text-anchor="middle" >3</text>
<text x="228.5" y="692" font-family="Liberation Sans" font-size="12" font-weight="bold" fill="#fff" text-anchor="middle" >4</text>
<text x="268.5" y="692" font-family="Liberation Sans" font-size="12" font-weight="bold" fill="#fff" text-anchor="middle" >5</text>
<rect x="71.5" y="679.5" width="7" height="4.5" fill="#00FFFF" stroke="#000" stroke-width="1.2"/>
<rect x="71.5" y="688" width="7" height="4.5" fill="#00FFFF" stroke="#000" stroke-width="1.2"/>
<rect x="248.5" y="703.5" width="7" height="5" fill="#00FFFF" stroke="#000" stroke-width="1.2"/>
<rect x="248.5" y="712" width="7" height="4.5" fill="#00FFFF" stroke="#000" stroke-width="1.2"/>
<g>
<circle cx="364.3" cy="703.5" r="8.5" fill="#00FFFF" stroke="#000" stroke-width="1.3"/>
<rect x="352.8" y="692.5" width="4" height="11" fill="#00FFFF" stroke="#000" stroke-width="1.2"/>
<circle cx="364.3" cy="703.5" r="5.5" fill="#00FFFF" stroke="#000" stroke-width="1"/>
<polygon points="358.8,703.5 361.3,701 376.3,701 376.3,706 361.3,706" fill="#00FFFF" stroke="#000" stroke-width="1.2"/>
<polygon points="359.3,712.5 369.3,712.5 373.8,717.5 352.8,717.5" fill="#00FFFF" stroke="#000" stroke-width="1.2"/>
</g>
<g transform="translate(819.2 0) scale(-1 1)">
<circle cx="409.6" cy="703.5" r="8.5" fill="#00FFFF" stroke="#000" stroke-width="1.3"/>
<rect x="398.1" y="692.5" width="4" height="11" fill="#00FFFF" stroke="#000" stroke-width="1.2"/>
<circle cx="409.6" cy="703.5" r="5.5" fill="#00FFFF" stroke="#000" stroke-width="1"/>
<polygon points="404.1,703.5 406.6,701 421.6,701 421.6,706 406.6,706" fill="#00FFFF" stroke="#000" stroke-width="1.2"/>
<polygon points="404.6,712.5 414.6,712.5 419.1,717.5 398.1,717.5" fill="#00FFFF" stroke="#000" stroke-width="1.2"/>
</g>
<text x="364.5" y="686" font-family="Liberation Sans" font-size="12" font-weight="bold" fill="#fff" text-anchor="middle" >6</text>
<text x="409.5" y="686" font-family="Liberation Sans" font-size="12" font-weight="bold" fill="#fff" text-anchor="middle" >7</text>
<rect x="387.5" y="697.5" width="7" height="5" fill="#00FFFF" stroke="#000" stroke-width="1.2"/>
<rect x="387.5" y="705.5" width="7" height="5" fill="#00FFFF" stroke="#000" stroke-width="1.2"/>
<text x="272" y="85" font-family="Liberation Sans" font-size="13" font-weight="bold" fill="#fff" text-anchor="start" letter-spacing="1">104</text>
<text x="467" y="85" font-family="Liberation Sans" font-size="13" font-weight="bold" fill="#fff" text-anchor="start" letter-spacing="1">116</text>
<text x="640" y="85" font-family="Liberation Sans" font-size="13" font-weight="bold" fill="#fff" text-anchor="start" letter-spacing="1">157</text>
<text x="767" y="85" font-family="Liberation Sans" font-size="13" font-weight="bold" fill="#fff" text-anchor="start" letter-spacing="1">161</text>
<text x="183" y="128" font-family="Liberation Sans" font-size="13" font-weight="bold" fill="#fff" text-anchor="start" letter-spacing="1">119</text>
<text x="210" y="197" font-family="Liberation Sans" font-size="13" font-weight="bold" fill="#fff" text-anchor="start" letter-spacing="1">173</text>
<text x="273.5" y="254" font-family="Liberation Sans" font-size="13" font-weight="bold" fill="#fff" text-anchor="start" letter-spacing="1">172</text>
<text x="373.5" y="261" font-family="Liberation Sans" font-size="13" font-weight="bold" fill="#fff" text-anchor="start" letter-spacing="1">105</text>
<text x="373.5" y="382" font-family="Liberation Sans" font-size="13" font-weight="bold" fill="#fff" text-anchor="start" letter-spacing="1">106</text>
<text x="238" y="308" font-family="Liberation Sans" font-size="13" font-weight="bold" fill="#fff" text-anchor="start" letter-spacing="1">120</text>
<text x="170" y="284" font-family="Liberation Sans" font-size="13" font-weight="bold" fill="#fff" text-anchor="start" letter-spacing="1">102</text>
<text x="243" y="450" font-family="Liberation Sans" font-size="13" font-weight="bold" fill="#fff" text-anchor="start" letter-spacing="1">103</text>
<text x="180.5" y="536" font-family="Liberation Sans" font-size="13" font-weight="bold" fill="#fff" text-anchor="start" letter-spacing="1">103A</text>
<text x="306.5" y="441" font-family="Liberation Sans" font-size="13" font-weight="bold" fill="#fff" text-anchor="start" letter-spacing="1">107</text>
<text x="404.5" y="441" font-family="Liberation Sans" font-size="13" font-weight="bold" fill="#fff" text-anchor="start" letter-spacing="1">109</text>
<text x="306.5" y="508" font-family="Liberation Sans" font-size="13" font-weight="bold" fill="#fff" text-anchor="start" letter-spacing="1">108</text>
<text x="404.5" y="508" font-family="Liberation Sans" font-size="13" font-weight="bold" fill="#fff" text-anchor="start" letter-spacing="1">110</text>
<text x="345.5" y="596" font-family="Liberation Sans" font-size="13" font-weight="bold" fill="#fff" text-anchor="start" letter-spacing="1">111</text>
<text x="396.5" y="596" font-family="Liberation Sans" font-size="13" font-weight="bold" fill="#fff" text-anchor="start" letter-spacing="1">112</text>
<text x="485.5" y="613" font-family="Liberation Sans" font-size="13" font-weight="bold" fill="#fff" text-anchor="start" letter-spacing="1">113</text>
<text x="485.5" y="634" font-family="Liberation Sans" font-size="13" font-weight="bold" fill="#fff" text-anchor="start" letter-spacing="1">114</text>
<text x="485.5" y="655" font-family="Liberation Sans" font-size="13" font-weight="bold" fill="#fff" text-anchor="start" letter-spacing="1">115</text>
<text x="478.5" y="191" font-family="Liberation Sans" font-size="13" font-weight="bold" fill="#fff" text-anchor="start" letter-spacing="1">167</text>
<text x="511.5" y="281" font-family="Liberation Sans" font-size="13" font-weight="bold" fill="#fff" text-anchor="start" letter-spacing="1">166</text>
<text x="506.5" y="360" font-family="Liberation Sans" font-size="13" font-weight="bold" fill="#fff" text-anchor="start" letter-spacing="1">169</text>
<text x="538" y="409" font-family="Liberation Sans" font-size="13" font-weight="bold" fill="#fff" text-anchor="start" letter-spacing="1">168</text>
<text x="506.5" y="498" font-family="Liberation Sans" font-size="13" font-weight="bold" fill="#fff" text-anchor="start" letter-spacing="1">171</text>
<text x="538" y="549" font-family="Liberation Sans" font-size="13" font-weight="bold" fill="#fff" text-anchor="start" letter-spacing="1">170</text>
<text x="555" y="131" font-family="Liberation Sans" font-size="13" font-weight="bold" fill="#fff" text-anchor="start" letter-spacing="1">117</text>
<text x="553" y="185" font-family="Liberation Sans" font-size="13" font-weight="bold" fill="#fff" text-anchor="start" letter-spacing="1">118</text>
<text x="554.5" y="590" font-family="Liberation Sans" font-size="13" font-weight="bold" fill="#fff" text-anchor="start" letter-spacing="1">151</text>
<text x="666.5" y="590" font-family="Liberation Sans" font-size="13" font-weight="bold" fill="#fff" text-anchor="start" letter-spacing="1">152</text>
<text x="568" y="633" font-family="Liberation Sans" font-size="13" font-weight="bold" fill="#fff" text-anchor="start" letter-spacing="1">153</text>
<text x="656" y="633" font-family="Liberation Sans" font-size="13" font-weight="bold" fill="#fff" text-anchor="start" letter-spacing="1">154</text>
<text x="568" y="655" font-family="Liberation Sans" font-size="13" font-weight="bold" fill="#fff" text-anchor="start" letter-spacing="1">155</text>
<text x="586.5" y="681" font-family="Liberation Sans" font-size="13" font-weight="bold" fill="#fff" text-anchor="start" letter-spacing="1">156</text>
<text x="690.5" y="224" font-family="Liberation Sans" font-size="13" font-weight="bold" fill="#fff" text-anchor="start" letter-spacing="1">158</text>
<text x="793.5" y="608" font-family="Liberation Sans" font-size="13" font-weight="bold" fill="#fff" text-anchor="start" letter-spacing="1">159</text>
<text x="761" y="646" font-family="Liberation Sans" font-size="13" font-weight="bold" fill="#fff" text-anchor="start" letter-spacing="1">160</text>
<text x="879.5" y="115" font-family="Liberation Sans" font-size="13" font-weight="bold" fill="#fff" text-anchor="start" letter-spacing="1">162</text>
<text x="879.5" y="136" font-family="Liberation Sans" font-size="13" font-weight="bold" fill="#fff" text-anchor="start" letter-spacing="1">163</text>
<text x="879.5" y="157" font-family="Liberation Sans" font-size="13" font-weight="bold" fill="#fff" text-anchor="start" letter-spacing="1">164</text>
<text x="818.5" y="283" font-family="Liberation Sans" font-size="13" font-weight="bold" fill="#fff" text-anchor="start" letter-spacing="1">165</text>
<text x="922" y="257" font-family="Liberation Sans" font-size="13" font-weight="bold" fill="#fff" text-anchor="start" letter-spacing="1">202</text>
<text x="920" y="343" font-family="Liberation Sans" font-size="13" font-weight="bold" fill="#fff" text-anchor="start" letter-spacing="1">203</text>
<text x="912" y="412" font-family="Liberation Sans" font-size="13" font-weight="bold" fill="#fff" text-anchor="start" letter-spacing="1">204</text>
<text x="841" y="680" font-family="Liberation Sans" font-size="13" font-weight="bold" fill="#fff" text-anchor="start" letter-spacing="1">201</text>
<text x="12" y="640" font-family="Liberation Sans" font-size="13" font-weight="bold" fill="#fff" text-anchor="start" letter-spacing="1">101</text>
<text x="871" y="454" font-family="Liberation Sans" font-size="12" font-weight="bold" fill="#fff" text-anchor="start" letter-spacing="0.6">RFP/400</text>
</svg>
</body></html>
